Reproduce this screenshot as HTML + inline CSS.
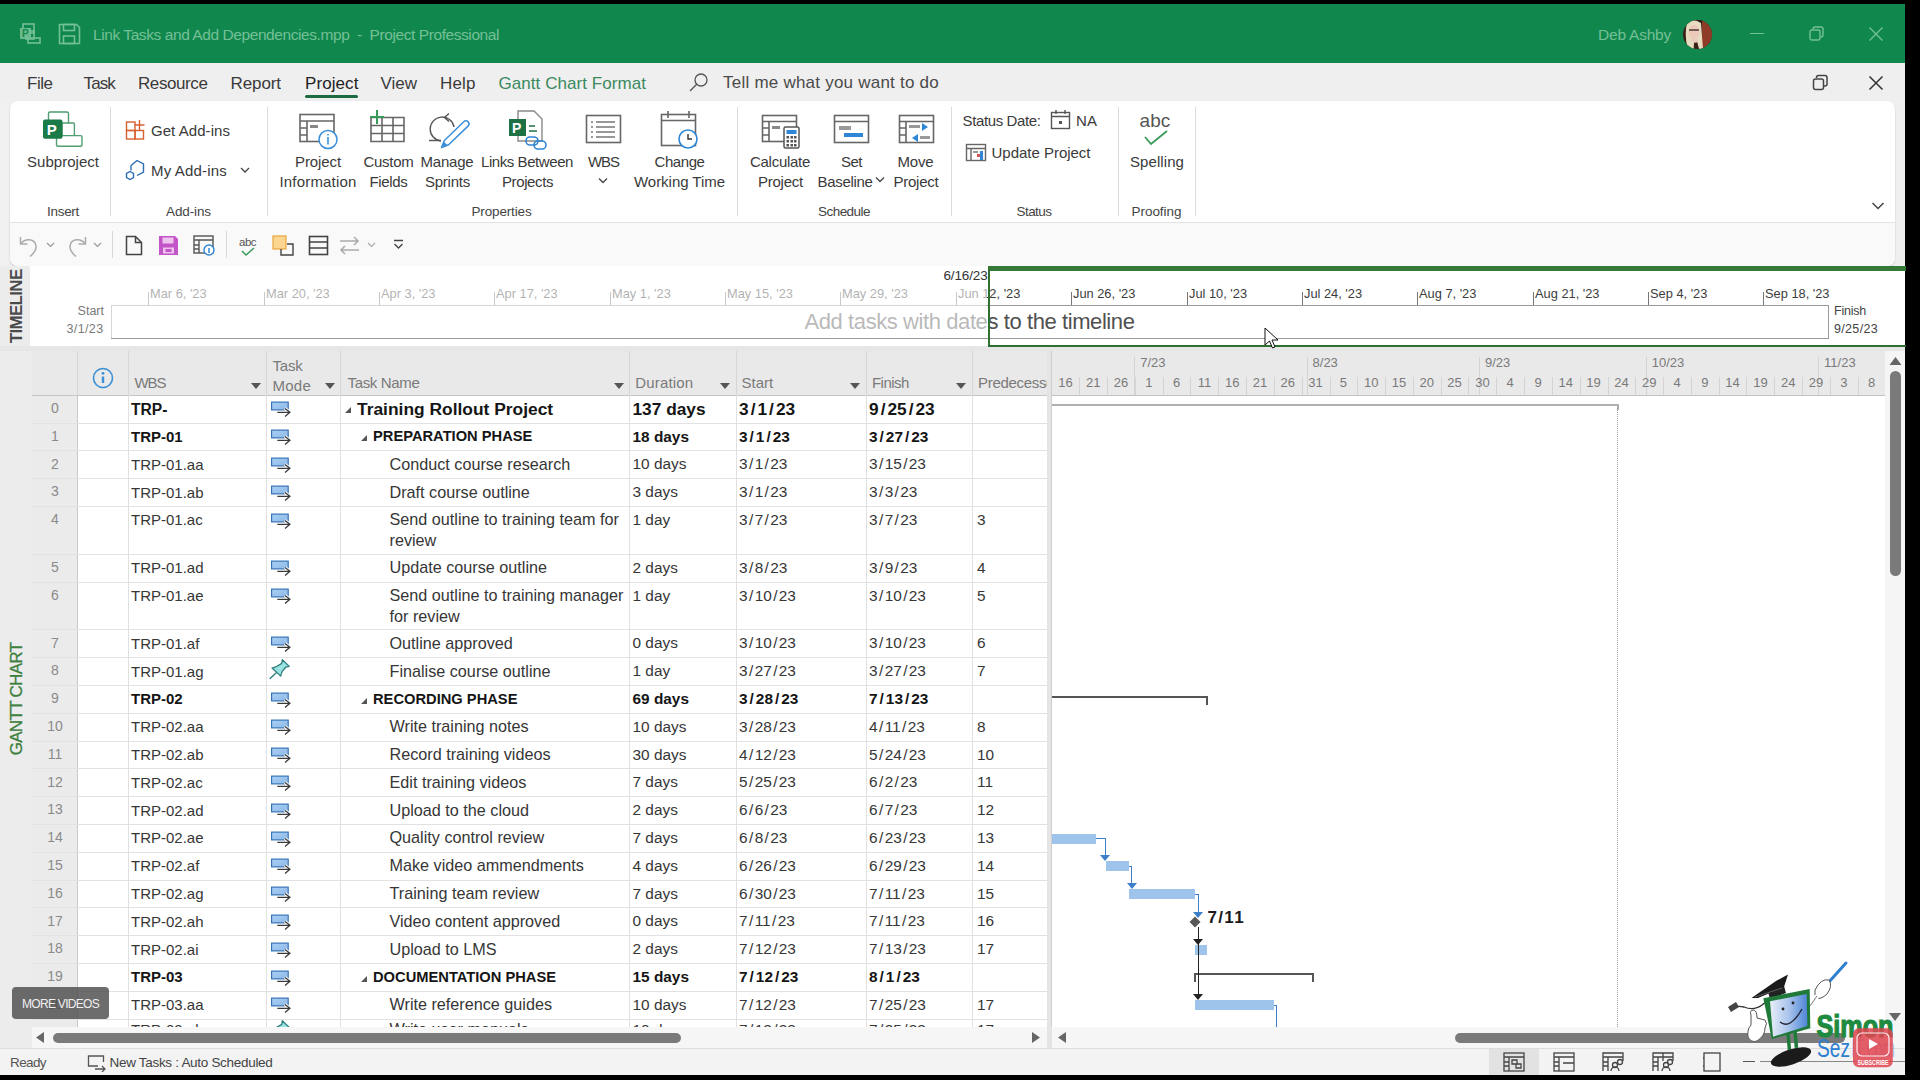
<!DOCTYPE html>
<html><head><meta charset="utf-8"><style>
html,body{margin:0;padding:0;}
body{width:1920px;height:1080px;overflow:hidden;position:relative;background:#000;font-family:"Liberation Sans", sans-serif;}
.t{position:absolute;white-space:nowrap;}

</style></head><body>
<div style="position:absolute;left:0px;top:4px;width:1905px;height:1071px;background:#f0f0f0"></div><div style="position:absolute;left:0px;top:4px;width:1905px;height:59px;background:#10874d"></div><svg style="position:absolute;left:19px;top:23px;" width="22" height="22" viewBox="0 0 22 22"><g fill="none" stroke="#74c096" stroke-width="1.6"><rect x="4" y="1" width="11" height="9"/><rect x="7" y="8" width="8" height="8"/><rect x="9" y="15" width="12" height="5"/></g><rect x="1" y="5" width="11" height="11" fill="#74c096" opacity="0.9"/><text x="3" y="14" font-size="10" font-weight="700" fill="#10874d" font-family="Liberation Sans">P</text></svg><svg style="position:absolute;left:58px;top:23px;" width="23" height="22" viewBox="0 0 23 22"><g fill="none" stroke="#74c096" stroke-width="1.6"><path d="M1.5 1.5h17l3 3v16h-20z"/><rect x="5.5" y="1.5" width="11" height="6"/><rect x="5.5" y="13" width="11" height="7.5"/></g></svg><div class="t" style="left:93.00px;top:26.88px;font-size:15.5px;line-height:15.5px;font-weight:400;color:#74c096;letter-spacing:-0.423px;white-space:pre;">Link Tasks and Add Dependencies.mpp  -  Project Professional</div><div class="t" style="left:1598.00px;top:26.88px;font-size:15.5px;line-height:15.5px;font-weight:400;color:#74c096;letter-spacing:-0.219px;">Deb Ashby</div><svg style="position:absolute;left:1682px;top:18.5px;" width="31" height="31" viewBox="0 0 31 31"><defs><clipPath id="av"><circle cx="15.5" cy="15.5" r="14.5"/></clipPath></defs><g clip-path="url(#av)"><rect width="31" height="31" fill="#3b2219"/><rect x="19" y="0" width="12" height="31" fill="#8e3b27"/><rect x="16" y="0" width="4" height="31" fill="#2a1a12"/><path d="M5 3 q7 -4 14 1 l2 26 h-4 l-3 -12 q-3 6 -2 12 h-6 q-4 -12 -1 -27z" fill="#e8dcc0"/><ellipse cx="12" cy="13" rx="5.5" ry="7" fill="#ecc9b9"/><path d="M7 11 h10" stroke="#4a3a34" stroke-width="1.4"/><path d="M9 18 q3 3 6 -1 l1 6 q-4 2 -7 -1z" fill="#e9cdbf"/></g></svg><div style="position:absolute;left:1750px;top:33px;width:14px;height:1.2px;background:#74c096"></div><svg style="position:absolute;left:1809px;top:26px;" width="16" height="16" viewBox="0 0 16 16"><g fill="none" stroke="#74c096" stroke-width="1.4"><rect x="1" y="4" width="10" height="10" rx="2"/><path d="M4 3.5V3a2 2 0 0 1 2-2h6a2 2 0 0 1 2 2v6a2 2 0 0 1-2 2h-.5"/></g></svg><svg style="position:absolute;left:1868px;top:26px;" width="16" height="16" viewBox="0 0 16 16"><path d="M1.5 1.5L14.5 14.5M14.5 1.5L1.5 14.5" stroke="#74c096" stroke-width="1.4"/></svg><div style="position:absolute;left:0px;top:63px;width:1905px;height:38px;background:#f0efef"></div><div class="t" style="left:27.00px;top:74.81px;font-size:17px;line-height:17px;font-weight:400;color:#3a3a3a;letter-spacing:-0.477px;">File</div><div class="t" style="left:83.50px;top:74.81px;font-size:17px;line-height:17px;font-weight:400;color:#3a3a3a;letter-spacing:-0.867px;">Task</div><div class="t" style="left:138.00px;top:74.81px;font-size:17px;line-height:17px;font-weight:400;color:#3a3a3a;letter-spacing:-0.408px;">Resource</div><div class="t" style="left:230.50px;top:74.81px;font-size:17px;line-height:17px;font-weight:400;color:#3a3a3a;letter-spacing:-0.089px;">Report</div><div class="t" style="left:305.00px;top:74.81px;font-size:17px;line-height:17px;font-weight:400;color:#222222;letter-spacing:0.083px;">Project</div><div class="t" style="left:380.50px;top:74.81px;font-size:17px;line-height:17px;font-weight:400;color:#3a3a3a;letter-spacing:-0.012px;">View</div><div class="t" style="left:440.00px;top:74.81px;font-size:17px;line-height:17px;font-weight:400;color:#3a3a3a;letter-spacing:0.133px;">Help</div><div style="position:absolute;left:305px;top:94.7px;width:53px;height:3px;background:#1d6b42;border-radius:2px"></div><div class="t" style="left:498.50px;top:74.81px;font-size:17px;line-height:17px;font-weight:400;color:#3a8a60;letter-spacing:0.059px;">Gantt Chart Format</div><svg style="position:absolute;left:688px;top:72px;" width="22" height="22" viewBox="0 0 22 22"><g fill="none" stroke="#555" stroke-width="1.3"><circle cx="13" cy="8" r="6"/><path d="M8.7 12.3L2 19"/></g></svg><div class="t" style="left:723.00px;top:74.31px;font-size:17px;line-height:17px;font-weight:400;color:#4a4a4a;letter-spacing:0.230px;">Tell me what you want to do</div><svg style="position:absolute;left:1812px;top:74px;" width="17" height="17" viewBox="0 0 17 17"><g fill="none" stroke="#444" stroke-width="1.5"><rect x="1.5" y="5" width="10" height="10.5" rx="2"/><path d="M4.5 4V3.5a2 2 0 0 1 2-2h6.5a2 2 0 0 1 2 2V10a2 2 0 0 1-2 2h-1"/></g></svg><svg style="position:absolute;left:1868px;top:75px;" width="16" height="16" viewBox="0 0 16 16"><path d="M1.5 1.5L14.5 14.5M14.5 1.5L1.5 14.5" stroke="#333" stroke-width="1.5"/></svg><div style="position:absolute;left:10px;top:101px;width:1885px;height:165px;background:#ffffff;border-radius:8px;box-shadow:0 1px 2px rgba(0,0,0,0.18)"></div><div style="position:absolute;left:10px;top:222px;width:1885px;height:1px;background:#e3e3e3"></div><div style="position:absolute;left:10px;top:223px;width:1885px;height:43px;background:#f9f9f9;border-radius:0 0 8px 8px"></div><div style="position:absolute;left:110px;top:107px;width:1px;height:109px;background:#dcdcdc"></div><div style="position:absolute;left:266.5px;top:107px;width:1px;height:109px;background:#dcdcdc"></div><div style="position:absolute;left:737px;top:107px;width:1px;height:109px;background:#dcdcdc"></div><div style="position:absolute;left:951px;top:107px;width:1px;height:109px;background:#dcdcdc"></div><div style="position:absolute;left:1117.5px;top:107px;width:1px;height:109px;background:#dcdcdc"></div><div style="position:absolute;left:1195px;top:107px;width:1px;height:109px;background:#dcdcdc"></div><svg style="position:absolute;left:42px;top:110px;" width="42" height="38" viewBox="0 0 42 38"><g fill="#fff" stroke="#4f9d70" stroke-width="1.4"><rect x="6.5" y="2" width="20" height="18" rx="1.5"/><rect x="19.9" y="13" width="12.5" height="13" rx="1"/><rect x="14.5" y="25.6" width="25.5" height="10.6" rx="1.5"/></g><rect x="1" y="9.4" width="19.5" height="19.3" rx="2" fill="#1a7a48"/><text x="4.8" y="24.5" font-size="15" font-weight="700" fill="#fff" font-family="Liberation Sans">P</text></svg><div class="t" style="left:27.00px;top:153.70px;font-size:15px;line-height:15px;font-weight:400;color:#3a3a3a;letter-spacing:0.028px;">Subproject</div><div class="t" style="left:47.00px;top:204.57px;font-size:13.5px;line-height:13.5px;font-weight:400;color:#444;letter-spacing:-0.294px;">Insert</div><svg style="position:absolute;left:125px;top:119px;" width="22" height="22" viewBox="0 0 22 22"><g fill="none" stroke="#d6602f" stroke-width="1.4"><rect x="1.5" y="3" width="8.5" height="8.5"/><rect x="1.5" y="11.5" width="8.5" height="8.5"/><rect x="10" y="11.5" width="8.5" height="8.5"/><path d="M14.5 1v10M9.5 6h10"/></g></svg><div class="t" style="left:151.00px;top:123.30px;font-size:15px;line-height:15px;font-weight:400;color:#3a3a3a;letter-spacing:0.055px;">Get Add-ins</div><svg style="position:absolute;left:125px;top:159px;" width="22" height="22" viewBox="0 0 22 22"><g fill="none" stroke="#2d6db3" stroke-width="1.4"><path d="M12 1.5l6.5 3.5v8l-6.5 3.5M6 6.5l6-5M6 6.5v5"/><path d="M5 12.5l3.5 2v4l-3.5 2-3.5-2v-4z"/></g></svg><div class="t" style="left:151.00px;top:163.30px;font-size:15px;line-height:15px;font-weight:400;color:#3a3a3a;letter-spacing:0.180px;">My Add-ins</div><svg style="position:absolute;left:240px;top:166px;" width="10" height="8" viewBox="0 0 10 8"><path d="M1 2l4 4 4-4" fill="none" stroke="#444" stroke-width="1.3"/></svg><div class="t" style="left:166.00px;top:204.57px;font-size:13.5px;line-height:13.5px;font-weight:400;color:#444;letter-spacing:-0.112px;">Add-ins</div><svg style="position:absolute;left:299px;top:113px;" width="40" height="37" viewBox="0 0 40 37"><g fill="none" stroke="#666" stroke-width="1.6"><rect x="1" y="1.5" width="34" height="27"/><path d="M1 8h34M8 8v20.5M1 15h7M1 22h7"/></g><rect x="11" y="12" width="8" height="3" fill="#888"/><circle cx="29" cy="26.5" r="9" fill="#fff" stroke="#3b8fd8" stroke-width="1.5"/><path d="M29 24v7.5M29 21v1.5" stroke="#3b8fd8" stroke-width="1.6"/></svg><div class="t" style="left:295.00px;top:153.90px;font-size:15px;line-height:15px;font-weight:400;color:#3a3a3a;letter-spacing:-0.098px;">Project</div><div class="t" style="left:279.50px;top:173.80px;font-size:15px;line-height:15px;font-weight:400;color:#3a3a3a;letter-spacing:0.178px;">Information</div><svg style="position:absolute;left:367px;top:109px;" width="40" height="35" viewBox="0 0 40 35"><g fill="none" stroke="#666" stroke-width="1.6"><path d="M4 8.5h33v24H4zM4 16.5h33M4 24.5h33M15 8.5v24M26 8.5v24"/></g><path d="M10 1v14M3 8h14" stroke="#3a9a5a" stroke-width="2"/></svg><div class="t" style="left:363.50px;top:153.90px;font-size:15px;line-height:15px;font-weight:400;color:#3a3a3a;letter-spacing:-0.281px;">Custom</div><div class="t" style="left:369.50px;top:173.80px;font-size:15px;line-height:15px;font-weight:400;color:#3a3a3a;letter-spacing:-0.336px;">Fields</div><svg style="position:absolute;left:428px;top:110px;" width="42" height="40" viewBox="0 0 42 40"><g fill="none" stroke="#555" stroke-width="1.4"><path d="M26 17A12 12 0 1 0 13 31"/><path d="M21 3.5L16.5 7.5L21 11.5"/><path d="M1 30.5H13"/></g><path d="M13.5 37.5L20.6 34.8L40 16.1A3 3 0 0 0 35.8 11.7L16.4 30.5Z" fill="#fff" stroke="#3b8fd8" stroke-width="1.5" stroke-linejoin="round"/><path d="M13.5 37.5L15.6 31.4L19.8 35.6Z" fill="#3b8fd8"/></svg><div class="t" style="left:420.50px;top:153.90px;font-size:15px;line-height:15px;font-weight:400;color:#3a3a3a;letter-spacing:-0.203px;">Manage</div><div class="t" style="left:425.00px;top:173.80px;font-size:15px;line-height:15px;font-weight:400;color:#3a3a3a;letter-spacing:-0.241px;">Sprints</div><svg style="position:absolute;left:508px;top:110px;" width="41" height="40" viewBox="0 0 41 40"><path d="M10 1h16l8 8v22H10z" fill="#fff" stroke="#888" stroke-width="1.4"/><rect x="1" y="9" width="17" height="17" fill="#1e7145"/><text x="4" y="23" font-size="14" font-weight="700" fill="#fff" font-family="Liberation Sans">P</text><path d="M21 16h6M21 21h8" stroke="#1e7145" stroke-width="1.6"/><g fill="none" stroke="#2f86d6" stroke-width="1.6"><rect x="18" y="27" width="12" height="8" rx="4"/><rect x="26" y="31" width="12" height="8" rx="4"/></g></svg><div class="t" style="left:481.00px;top:153.90px;font-size:15px;line-height:15px;font-weight:400;color:#3a3a3a;letter-spacing:-0.428px;">Links Between</div><div class="t" style="left:502.00px;top:173.80px;font-size:15px;line-height:15px;font-weight:400;color:#3a3a3a;letter-spacing:-0.398px;">Projects</div><svg style="position:absolute;left:585px;top:114px;" width="37" height="30" viewBox="0 0 37 30"><g fill="none" stroke="#666" stroke-width="1.6"><rect x="1.5" y="1.5" width="34" height="27"/></g><g stroke="#777" stroke-width="1.4"><path d="M6 8h2M11 8h19M6 13h2M11 13h19M6 18h2M11 18h19M6 23h2M11 23h19"/></g></svg><div class="t" style="left:588.00px;top:153.90px;font-size:15px;line-height:15px;font-weight:400;color:#3a3a3a;letter-spacing:-1.057px;">WBS</div><svg style="position:absolute;left:598px;top:177px;" width="10" height="7" viewBox="0 0 10 7"><path d="M1 1.5l4 4 4-4" fill="none" stroke="#444" stroke-width="1.3"/></svg><svg style="position:absolute;left:660px;top:110px;" width="41" height="40" viewBox="0 0 41 40"><g fill="none" stroke="#666" stroke-width="1.6"><rect x="1.5" y="4.5" width="34" height="31"/><path d="M1.5 10.5h34M8 1v7M29 1v7"/></g><circle cx="28" cy="29" r="9" fill="#fff" stroke="#2f86d6" stroke-width="1.6"/><path d="M28 24v5h4" fill="none" stroke="#333" stroke-width="1.4"/></svg><div class="t" style="left:654.50px;top:153.90px;font-size:15px;line-height:15px;font-weight:400;color:#3a3a3a;letter-spacing:-0.424px;">Change</div><div class="t" style="left:634.00px;top:173.80px;font-size:15px;line-height:15px;font-weight:400;color:#3a3a3a;letter-spacing:-0.035px;">Working Time</div><div class="t" style="left:471.50px;top:204.57px;font-size:13.5px;line-height:13.5px;font-weight:400;color:#444;letter-spacing:-0.153px;">Properties</div><svg style="position:absolute;left:761px;top:114px;" width="40" height="36" viewBox="0 0 40 36"><g fill="none" stroke="#666" stroke-width="1.6"><rect x="1.5" y="1.5" width="34" height="26"/><path d="M1.5 7.5h34M8 7.5v20M1.5 14h6.5M1.5 21h6.5"/></g><rect x="11" y="12" width="8" height="3" fill="#888"/><rect x="23" y="13" width="15" height="21" rx="1.5" fill="#fff" stroke="#555" stroke-width="1.5"/><rect x="25.5" y="16" width="10" height="4" fill="#2f86d6"/><g fill="#555"><rect x="25.5" y="22" width="2.5" height="2.5"/><rect x="29.5" y="22" width="2.5" height="2.5"/><rect x="33" y="22" width="2.5" height="2.5"/><rect x="25.5" y="26" width="2.5" height="2.5"/><rect x="29.5" y="26" width="2.5" height="2.5"/><rect x="33" y="26" width="2.5" height="2.5"/><rect x="25.5" y="30" width="2.5" height="2.5"/><rect x="29.5" y="30" width="2.5" height="2.5"/><rect x="33" y="30" width="2.5" height="2.5"/></g></svg><div class="t" style="left:750.00px;top:153.90px;font-size:15px;line-height:15px;font-weight:400;color:#3a3a3a;letter-spacing:-0.283px;">Calculate</div><div class="t" style="left:758.00px;top:173.80px;font-size:15px;line-height:15px;font-weight:400;color:#3a3a3a;letter-spacing:-0.241px;">Project</div><svg style="position:absolute;left:833px;top:114px;" width="37" height="30" viewBox="0 0 37 30"><g fill="none" stroke="#666" stroke-width="1.6"><rect x="1.5" y="1.5" width="34" height="27"/><path d="M1.5 7.5h34"/></g><rect x="6" y="12" width="12" height="4" fill="#999"/><rect x="11" y="19" width="19" height="4" fill="#2f86d6"/></svg><div class="t" style="left:841.00px;top:153.90px;font-size:15px;line-height:15px;font-weight:400;color:#3a3a3a;letter-spacing:-0.505px;">Set</div><div class="t" style="left:817.50px;top:173.80px;font-size:15px;line-height:15px;font-weight:400;color:#3a3a3a;letter-spacing:-0.318px;">Baseline</div><svg style="position:absolute;left:875px;top:176px;" width="10" height="7" viewBox="0 0 10 7"><path d="M1 1.5l4 4 4-4" fill="none" stroke="#444" stroke-width="1.3"/></svg><svg style="position:absolute;left:898px;top:114px;" width="37" height="30" viewBox="0 0 37 30"><g fill="none" stroke="#666" stroke-width="1.6"><rect x="1.5" y="1.5" width="34" height="27"/><path d="M1.5 7.5h34M8 7.5v21M1.5 14h6.5M1.5 21h6.5"/></g><rect x="11" y="11" width="11" height="3" fill="#999"/><path d="M24 9l6 4-6 4z" fill="#2f86d6"/><path d="M20 20l-6 4 6 4z" fill="#2f86d6"/><rect x="22" y="22" width="10" height="3" fill="#999"/></svg><div class="t" style="left:897.50px;top:153.90px;font-size:15px;line-height:15px;font-weight:400;color:#3a3a3a;letter-spacing:-0.172px;">Move</div><div class="t" style="left:893.50px;top:173.80px;font-size:15px;line-height:15px;font-weight:400;color:#3a3a3a;letter-spacing:-0.241px;">Project</div><div class="t" style="left:818.00px;top:204.57px;font-size:13.5px;line-height:13.5px;font-weight:400;color:#444;letter-spacing:-0.537px;">Schedule</div><div class="t" style="left:962.50px;top:113.30px;font-size:15px;line-height:15px;font-weight:400;color:#3a3a3a;letter-spacing:-0.379px;">Status Date:</div><svg style="position:absolute;left:1050px;top:109px;" width="22" height="22" viewBox="0 0 22 22"><g fill="none" stroke="#555" stroke-width="1.4"><rect x="1.5" y="3.5" width="18" height="16"/><path d="M1.5 7.5h18M6 1v4M15 1v4"/></g><rect x="9" y="12" width="3" height="3" fill="#555"/></svg><div class="t" style="left:1076.00px;top:113.30px;font-size:15px;line-height:15px;font-weight:400;color:#3a3a3a;letter-spacing:0.078px;">NA</div><svg style="position:absolute;left:965px;top:143px;" width="23" height="20" viewBox="0 0 23 20"><g fill="none" stroke="#666" stroke-width="1.4"><rect x="1.5" y="1.5" width="19" height="16"/><path d="M1.5 5.5h19M6 5.5v12"/></g><rect x="8" y="8" width="5" height="2" fill="#999"/><rect x="12" y="11" width="6" height="3" fill="#d9534f"/><rect x="15" y="8" width="3" height="9" fill="#2f86d6"/></svg><div class="t" style="left:991.50px;top:144.90px;font-size:15px;line-height:15px;font-weight:400;color:#3a3a3a;letter-spacing:-0.017px;">Update Project</div><div class="t" style="left:1016.50px;top:204.57px;font-size:13.5px;line-height:13.5px;font-weight:400;color:#444;letter-spacing:-0.547px;">Status</div><div class="t" style="left:1139.50px;top:110.92px;font-size:19px;line-height:19px;font-weight:400;color:#555;letter-spacing:0.120px;">abc</div><svg style="position:absolute;left:1143px;top:129px;" width="26" height="18" viewBox="0 0 26 18"><path d="M2 8l6 7L24 2" fill="none" stroke="#3a9a5a" stroke-width="1.8"/></svg><div class="t" style="left:1130.00px;top:153.90px;font-size:15px;line-height:15px;font-weight:400;color:#3a3a3a;letter-spacing:0.078px;">Spelling</div><div class="t" style="left:1131.50px;top:204.57px;font-size:13.5px;line-height:13.5px;font-weight:400;color:#444;letter-spacing:-0.037px;">Proofing</div><svg style="position:absolute;left:1871px;top:201px;" width="14" height="10" viewBox="0 0 14 10"><path d="M1.5 2l5.5 5.5L12.5 2" fill="none" stroke="#444" stroke-width="1.5"/></svg><svg style="position:absolute;left:18px;top:234px;" width="22" height="24" viewBox="0 0 22 24"><g fill="none" stroke="#aaa" stroke-width="1.5"><path d="M3 9.5C7 4 17 4 18 12c0.5 5-3 8-6 10.5"/><path d="M2.5 3v7h7"/></g></svg><svg style="position:absolute;left:46px;top:242px;" width="9" height="6" viewBox="0 0 9 6"><path d="M1 1l3.5 3.5L8 1" fill="none" stroke="#999" stroke-width="1.2"/></svg><svg style="position:absolute;left:66px;top:234px;" width="22" height="24" viewBox="0 0 22 24"><g fill="none" stroke="#aaa" stroke-width="1.5"><path d="M19 9.5C15 4 5 4 4 12c-0.5 5 3 8 6 10.5"/><path d="M19.5 3v7h-7"/></g></svg><svg style="position:absolute;left:93px;top:242px;" width="9" height="6" viewBox="0 0 9 6"><path d="M1 1l3.5 3.5L8 1" fill="none" stroke="#999" stroke-width="1.2"/></svg><div style="position:absolute;left:111.5px;top:231px;width:1px;height:27px;background:#d8d8d8"></div><svg style="position:absolute;left:125px;top:235px;" width="18" height="21" viewBox="0 0 18 21"><path d="M1.5 1.5h9l6 6v12h-15z M10.5 1.5v6h6" fill="none" stroke="#444" stroke-width="1.5"/></svg><svg style="position:absolute;left:158px;top:235px;" width="21" height="21" viewBox="0 0 21 21"><path d="M1 1h16l3 3v16H1z" fill="#c455c8"/><rect x="4.5" y="2.5" width="11" height="6" fill="#eec3ee"/><rect x="5" y="12.5" width="11" height="6" fill="#eec3ee"/><rect x="7.5" y="14" width="6" height="3" fill="#c455c8"/></svg><svg style="position:absolute;left:193px;top:235px;" width="22" height="21" viewBox="0 0 22 21"><g fill="none" stroke="#555" stroke-width="1.4"><rect x="1" y="1" width="19" height="17"/><path d="M1 5h19M6 5v13M1 10h5M1 14h5"/></g><circle cx="16" cy="15" r="5" fill="#fff" stroke="#2f86d6" stroke-width="1.4"/><path d="M16 13v5" stroke="#2f86d6" stroke-width="1.5"/></svg><div style="position:absolute;left:225.5px;top:231px;width:1px;height:27px;background:#d8d8d8"></div><div class="t" style="left:239.00px;top:237.27px;font-size:11.5px;line-height:11.5px;font-weight:400;color:#555;letter-spacing:-0.516px;">abc</div><svg style="position:absolute;left:241px;top:247px;" width="14" height="9" viewBox="0 0 14 9"><path d="M1 4l4 4 8-7" fill="none" stroke="#3a9a5a" stroke-width="1.5"/></svg><svg style="position:absolute;left:272px;top:235px;" width="22" height="21" viewBox="0 0 22 21"><rect x="1" y="1" width="13" height="13" fill="#fcd690" stroke="#e9a53c" stroke-width="1.2"/><path d="M9 14v6h12V9h-6" fill="none" stroke="#444" stroke-width="1.4"/></svg><svg style="position:absolute;left:308px;top:235px;" width="22" height="21" viewBox="0 0 22 21"><g fill="none" stroke="#444" stroke-width="1.6"><rect x="1.5" y="1.5" width="18" height="18"/><path d="M1.5 7h18M1.5 13h18"/></g></svg><svg style="position:absolute;left:338px;top:235px;" width="23" height="21" viewBox="0 0 23 21"><g fill="none" stroke="#aaa" stroke-width="1.5"><path d="M2 6h18M16 2l4 4-4 4M21 15H3M7 11l-4 4 4 4"/></g></svg><svg style="position:absolute;left:367px;top:242px;" width="9" height="6" viewBox="0 0 9 6"><path d="M1 1l3.5 3.5L8 1" fill="none" stroke="#aaa" stroke-width="1.2"/></svg><svg style="position:absolute;left:393px;top:239px;" width="11" height="12" viewBox="0 0 11 12"><path d="M1 1.5h9M1.5 5l4 4 4-4" fill="none" stroke="#444" stroke-width="1.4"/></svg><div style="position:absolute;left:0px;top:266px;width:1905px;height:85px;background:#ffffff"></div><div style="position:absolute;left:0px;top:266px;width:30px;height:80px;background:#ececec"></div><div class="t" style="left:15.5px;top:306.3px;font-size:17px;line-height:17px;font-weight:700;color:#4a4a4a;transform:translate(-50%,-50%) rotate(-90deg);letter-spacing:-0.7px;text-indent:-0.7px">TIMELINE</div><div style="position:absolute;left:0px;top:346px;width:1905px;height:5px;background:#e6e6e6"></div><div style="position:absolute;left:110.5px;top:305px;width:1718px;height:34px;box-sizing:border-box;border:1px solid #9a9a9a;background:#fff"></div><div style="position:absolute;left:147.5px;top:292px;width:1px;height:13px;background:#777"></div><div class="t" style="left:150.30px;top:286.57px;font-size:13.5px;line-height:13.5px;font-weight:400;color:#3c3c3c;transform:scaleX(0.95);transform-origin:0 0;">Mar 6, &#x27;23</div><div style="position:absolute;left:263.5px;top:292px;width:1px;height:13px;background:#777"></div><div class="t" style="left:265.66px;top:286.57px;font-size:13.5px;line-height:13.5px;font-weight:400;color:#3c3c3c;transform:scaleX(0.95);transform-origin:0 0;">Mar 20, &#x27;23</div><div style="position:absolute;left:378.5px;top:292px;width:1px;height:13px;background:#777"></div><div class="t" style="left:381.02px;top:286.57px;font-size:13.5px;line-height:13.5px;font-weight:400;color:#3c3c3c;transform:scaleX(0.95);transform-origin:0 0;">Apr 3, &#x27;23</div><div style="position:absolute;left:493.5px;top:292px;width:1px;height:13px;background:#777"></div><div class="t" style="left:496.38px;top:286.57px;font-size:13.5px;line-height:13.5px;font-weight:400;color:#3c3c3c;transform:scaleX(0.95);transform-origin:0 0;">Apr 17, &#x27;23</div><div style="position:absolute;left:609.5px;top:292px;width:1px;height:13px;background:#777"></div><div class="t" style="left:611.74px;top:286.57px;font-size:13.5px;line-height:13.5px;font-weight:400;color:#3c3c3c;transform:scaleX(0.95);transform-origin:0 0;">May 1, &#x27;23</div><div style="position:absolute;left:724.5px;top:292px;width:1px;height:13px;background:#777"></div><div class="t" style="left:727.10px;top:286.57px;font-size:13.5px;line-height:13.5px;font-weight:400;color:#3c3c3c;transform:scaleX(0.95);transform-origin:0 0;">May 15, &#x27;23</div><div style="position:absolute;left:839.5px;top:292px;width:1px;height:13px;background:#777"></div><div class="t" style="left:842.46px;top:286.57px;font-size:13.5px;line-height:13.5px;font-weight:400;color:#3c3c3c;transform:scaleX(0.95);transform-origin:0 0;">May 29, &#x27;23</div><div style="position:absolute;left:955.5px;top:292px;width:1px;height:13px;background:#777"></div><div class="t" style="left:957.82px;top:286.57px;font-size:13.5px;line-height:13.5px;font-weight:400;color:#3c3c3c;transform:scaleX(0.95);transform-origin:0 0;">Jun 12, &#x27;23</div><div style="position:absolute;left:1070.5px;top:292px;width:1px;height:13px;background:#777"></div><div class="t" style="left:1073.18px;top:286.57px;font-size:13.5px;line-height:13.5px;font-weight:400;color:#3c3c3c;transform:scaleX(0.95);transform-origin:0 0;">Jun 26, &#x27;23</div><div style="position:absolute;left:1186.5px;top:292px;width:1px;height:13px;background:#777"></div><div class="t" style="left:1188.54px;top:286.57px;font-size:13.5px;line-height:13.5px;font-weight:400;color:#3c3c3c;transform:scaleX(0.95);transform-origin:0 0;">Jul 10, &#x27;23</div><div style="position:absolute;left:1301.5px;top:292px;width:1px;height:13px;background:#777"></div><div class="t" style="left:1303.90px;top:286.57px;font-size:13.5px;line-height:13.5px;font-weight:400;color:#3c3c3c;transform:scaleX(0.95);transform-origin:0 0;">Jul 24, &#x27;23</div><div style="position:absolute;left:1416.5px;top:292px;width:1px;height:13px;background:#777"></div><div class="t" style="left:1419.26px;top:286.57px;font-size:13.5px;line-height:13.5px;font-weight:400;color:#3c3c3c;transform:scaleX(0.95);transform-origin:0 0;">Aug 7, &#x27;23</div><div style="position:absolute;left:1532.5px;top:292px;width:1px;height:13px;background:#777"></div><div class="t" style="left:1534.62px;top:286.57px;font-size:13.5px;line-height:13.5px;font-weight:400;color:#3c3c3c;transform:scaleX(0.95);transform-origin:0 0;">Aug 21, &#x27;23</div><div style="position:absolute;left:1647.5px;top:292px;width:1px;height:13px;background:#777"></div><div class="t" style="left:1649.98px;top:286.57px;font-size:13.5px;line-height:13.5px;font-weight:400;color:#3c3c3c;transform:scaleX(0.95);transform-origin:0 0;">Sep 4, &#x27;23</div><div style="position:absolute;left:1762.5px;top:292px;width:1px;height:13px;background:#777"></div><div class="t" style="left:1765.34px;top:286.57px;font-size:13.5px;line-height:13.5px;font-weight:400;color:#3c3c3c;transform:scaleX(0.95);transform-origin:0 0;">Sep 18, &#x27;23</div><div class="t" style="left:77.59px;top:305.12px;font-size:12.5px;line-height:12.5px;font-weight:400;color:#7a7a7a;">Start</div><div class="t" style="left:66.50px;top:322.72px;font-size:12.5px;line-height:12.5px;font-weight:400;color:#7a7a7a;letter-spacing:0.372px;">3/1/23</div><div class="t" style="left:1834.00px;top:305.12px;font-size:12.5px;line-height:12.5px;font-weight:400;color:#444;letter-spacing:-0.224px;">Finish</div><div class="t" style="left:1834.00px;top:322.72px;font-size:12.5px;line-height:12.5px;font-weight:400;color:#444;letter-spacing:0.326px;">9/25/23</div><div class="t" style="left:804.50px;top:310.68px;font-size:22px;line-height:22px;font-weight:400;color:#505050;letter-spacing:-0.413px;">Add tasks with dates to the timeline</div><div style="position:absolute;left:111px;top:276px;width:876px;height:62px;background:rgba(255,255,255,0.6)"></div><div class="t" style="left:943.50px;top:268.57px;font-size:13.5px;line-height:13.5px;font-weight:400;color:#333;letter-spacing:-0.150px;">6/16/23</div><div style="position:absolute;left:987.5px;top:266px;width:918px;height:80.5px;box-sizing:border-box;border-left:2px solid #2f6f2f;border-bottom:2px solid #2f6f2f;border-top:5px solid #347a36"></div><div style="position:absolute;left:0px;top:351px;width:1047px;height:44px;background:#e9e9e9"></div><div style="position:absolute;left:32px;top:394.5px;width:1015px;height:1px;background:#c2c2c2"></div><div style="position:absolute;left:77px;top:351px;width:1px;height:44px;background:#d6d6d6"></div><div style="position:absolute;left:128px;top:351px;width:1px;height:44px;background:#d6d6d6"></div><div style="position:absolute;left:266px;top:351px;width:1px;height:44px;background:#d6d6d6"></div><div style="position:absolute;left:340px;top:351px;width:1px;height:44px;background:#d6d6d6"></div><div style="position:absolute;left:629px;top:351px;width:1px;height:44px;background:#d6d6d6"></div><div style="position:absolute;left:736px;top:351px;width:1px;height:44px;background:#d6d6d6"></div><div style="position:absolute;left:866px;top:351px;width:1px;height:44px;background:#d6d6d6"></div><div style="position:absolute;left:972px;top:351px;width:1px;height:44px;background:#d6d6d6"></div><svg style="position:absolute;left:92px;top:367px;" width="22" height="22" viewBox="0 0 22 22"><circle cx="11" cy="11" r="9.5" fill="none" stroke="#3a8fd6" stroke-width="1.6"/><path d="M11 9.5v6.5" stroke="#3a8fd6" stroke-width="2.4"/><circle cx="11" cy="6.3" r="1.4" fill="#3a8fd6"/></svg><div class="t" style="left:134.50px;top:374.90px;font-size:15px;line-height:15px;font-weight:400;color:#7a7a7a;letter-spacing:-1.057px;">WBS</div><div class="t" style="left:272.50px;top:357.70px;font-size:15px;line-height:15px;font-weight:400;color:#7a7a7a;letter-spacing:-0.211px;">Task</div><div class="t" style="left:272.50px;top:378.30px;font-size:15px;line-height:15px;font-weight:400;color:#7a7a7a;letter-spacing:0.242px;">Mode</div><div class="t" style="left:347.50px;top:374.90px;font-size:15px;line-height:15px;font-weight:400;color:#7a7a7a;letter-spacing:-0.337px;">Task Name</div><div class="t" style="left:635.30px;top:374.90px;font-size:15px;line-height:15px;font-weight:400;color:#7a7a7a;letter-spacing:0.162px;">Duration</div><div class="t" style="left:741.60px;top:374.90px;font-size:15px;line-height:15px;font-weight:400;color:#7a7a7a;letter-spacing:-0.037px;">Start</div><div class="t" style="left:871.90px;top:374.90px;font-size:15px;line-height:15px;font-weight:400;color:#7a7a7a;letter-spacing:-0.503px;">Finish</div><div style="position:absolute;left:972px;top:351px;width:75px;height:44px;overflow:hidden"><div class="t" style="left:6.00px;top:23.90px;font-size:15px;line-height:15px;font-weight:400;color:#7a7a7a;letter-spacing:-0.310px;">Predecessors</div></div><svg style="position:absolute;left:250.5px;top:382.5px;" width="10" height="6" viewBox="0 0 10 6"><path d="M0 0h10L5 6z" fill="#555"/></svg><svg style="position:absolute;left:325px;top:382.5px;" width="10" height="6" viewBox="0 0 10 6"><path d="M0 0h10L5 6z" fill="#555"/></svg><svg style="position:absolute;left:614px;top:382.5px;" width="10" height="6" viewBox="0 0 10 6"><path d="M0 0h10L5 6z" fill="#555"/></svg><svg style="position:absolute;left:720.3px;top:382.5px;" width="10" height="6" viewBox="0 0 10 6"><path d="M0 0h10L5 6z" fill="#555"/></svg><svg style="position:absolute;left:850px;top:382.5px;" width="10" height="6" viewBox="0 0 10 6"><path d="M0 0h10L5 6z" fill="#555"/></svg><svg style="position:absolute;left:956.3px;top:382.5px;" width="10" height="6" viewBox="0 0 10 6"><path d="M0 0h10L5 6z" fill="#555"/></svg><div style="position:absolute;left:0px;top:395px;width:1047px;height:632px;background:#ffffff"></div><div style="position:absolute;left:0px;top:351px;width:32px;height:724px;background:#ececec"></div><div style="position:absolute;left:32px;top:395px;width:45.5px;height:632px;background:#ebebeb"></div><div style="position:absolute;left:32px;top:394.5px;width:1015px;height:1px;background:#c6c6c6"></div><div style="position:absolute;left:77px;top:395px;width:1px;height:632px;background:#c8c8c8"></div><div class="t" style="left:15.5px;top:699px;font-size:17px;line-height:17px;font-weight:400;color:#3d803d;transform:translate(-50%,-50%) rotate(-90deg);letter-spacing:-0.7px;-webkit-text-stroke:0.3px #3d803d">GANTT CHART</div><div style="position:absolute;left:0;top:0;width:1047px;height:1027px;overflow:hidden"><div style="position:absolute;left:32px;top:423px;width:1015px;height:1px;background:#e2e2e2"></div><div class="t" style="left:51.10px;top:400.95px;font-size:14px;line-height:14px;font-weight:400;color:#8a8a8a;">0</div><div class="t" style="left:131.00px;top:402.29px;font-size:15.6px;line-height:15.6px;font-weight:700;color:#151515;">TRP-</div><svg style="position:absolute;left:270px;top:400.3px;" width="22" height="18" viewBox="0 0 22 18"><defs><linearGradient id="tg" x1="0" y1="0" x2="1" y2="1"><stop offset="0" stop-color="#a8d0f6"/><stop offset="1" stop-color="#8fb8e6"/></linearGradient></defs><rect x="1.6" y="2.1" width="16.6" height="7.8" fill="url(#tg)" stroke="#2d6cb0" stroke-width="1.1"/><path d="M15 8.5L19.9 12.3L15 16.4" fill="none" stroke="#fff" stroke-width="3.2"/><path d="M7.3 12.3h12.4M15 8.5L19.9 12.3L15 16.4" fill="none" stroke="#3a3a3a" stroke-width="1.3"/></svg><svg style="position:absolute;left:344px;top:406.3px;" width="8" height="8" viewBox="0 0 8 8"><path d="M7 1v6H1z" fill="#555"/></svg><div class="t" style="left:357.00px;top:400.77px;font-size:17.4px;line-height:17.4px;font-weight:700;color:#151515;">Training Rollout Project</div><div class="t" style="left:632.50px;top:400.86px;font-size:17.3px;line-height:17.3px;font-weight:700;color:#151515;">137 days</div><div class="t" style="left:739.00px;top:400.86px;font-size:17.3px;line-height:17.3px;font-weight:700;color:#151515;">3<span style="margin:0 2.0px">/</span>1<span style="margin:0 2.0px">/</span>23</div><div class="t" style="left:869.00px;top:400.86px;font-size:17.3px;line-height:17.3px;font-weight:700;color:#151515;">9<span style="margin:0 2.0px">/</span>25<span style="margin:0 2.0px">/</span>23</div><div style="position:absolute;left:32px;top:450px;width:1015px;height:1px;background:#e2e2e2"></div><div class="t" style="left:51.10px;top:428.75px;font-size:14px;line-height:14px;font-weight:400;color:#8a8a8a;">1</div><div class="t" style="left:131.00px;top:429.00px;font-size:15px;line-height:15px;font-weight:700;color:#151515;">TRP-01</div><svg style="position:absolute;left:270px;top:428.1px;" width="22" height="18" viewBox="0 0 22 18"><defs><linearGradient id="tg" x1="0" y1="0" x2="1" y2="1"><stop offset="0" stop-color="#a8d0f6"/><stop offset="1" stop-color="#8fb8e6"/></linearGradient></defs><rect x="1.6" y="2.1" width="16.6" height="7.8" fill="url(#tg)" stroke="#2d6cb0" stroke-width="1.1"/><path d="M15 8.5L19.9 12.3L15 16.4" fill="none" stroke="#fff" stroke-width="3.2"/><path d="M7.3 12.3h12.4M15 8.5L19.9 12.3L15 16.4" fill="none" stroke="#3a3a3a" stroke-width="1.3"/></svg><svg style="position:absolute;left:360px;top:434.1px;" width="8" height="8" viewBox="0 0 8 8"><path d="M7 1v6H1z" fill="#555"/></svg><div class="t" style="left:373.00px;top:429.26px;font-size:14.7px;line-height:14.7px;font-weight:700;color:#151515;">PREPARATION PHASE</div><div class="t" style="left:632.50px;top:428.66px;font-size:15.4px;line-height:15.4px;font-weight:700;color:#151515;">18 days</div><div class="t" style="left:739.00px;top:428.66px;font-size:15.4px;line-height:15.4px;font-weight:700;color:#151515;">3<span style="margin:0 2.0px">/</span>1<span style="margin:0 2.0px">/</span>23</div><div class="t" style="left:869.00px;top:428.66px;font-size:15.4px;line-height:15.4px;font-weight:700;color:#151515;">3<span style="margin:0 2.0px">/</span>27<span style="margin:0 2.0px">/</span>23</div><div style="position:absolute;left:32px;top:478px;width:1015px;height:1px;background:#e2e2e2"></div><div class="t" style="left:51.10px;top:456.55px;font-size:14px;line-height:14px;font-weight:400;color:#8a8a8a;">2</div><div class="t" style="left:131.00px;top:456.80px;font-size:15px;line-height:15px;font-weight:400;color:#363636;">TRP-01.aa</div><svg style="position:absolute;left:270px;top:455.90000000000003px;" width="22" height="18" viewBox="0 0 22 18"><defs><linearGradient id="tg" x1="0" y1="0" x2="1" y2="1"><stop offset="0" stop-color="#a8d0f6"/><stop offset="1" stop-color="#8fb8e6"/></linearGradient></defs><rect x="1.6" y="2.1" width="16.6" height="7.8" fill="url(#tg)" stroke="#2d6cb0" stroke-width="1.1"/><path d="M15 8.5L19.9 12.3L15 16.4" fill="none" stroke="#fff" stroke-width="3.2"/><path d="M7.3 12.3h12.4M15 8.5L19.9 12.3L15 16.4" fill="none" stroke="#3a3a3a" stroke-width="1.3"/></svg><div class="t" style="left:389.50px;top:455.79px;font-size:16.2px;line-height:16.2px;font-weight:400;color:#363636;">Conduct course research</div><div class="t" style="left:632.50px;top:456.46px;font-size:15.4px;line-height:15.4px;font-weight:400;color:#363636;">10 days</div><div class="t" style="left:739.00px;top:456.46px;font-size:15.4px;line-height:15.4px;font-weight:400;color:#363636;">3<span style="margin:0 1.4px">/</span>1<span style="margin:0 1.4px">/</span>23</div><div class="t" style="left:869.00px;top:456.46px;font-size:15.4px;line-height:15.4px;font-weight:400;color:#363636;">3<span style="margin:0 1.4px">/</span>15<span style="margin:0 1.4px">/</span>23</div><div style="position:absolute;left:32px;top:506px;width:1015px;height:1px;background:#e2e2e2"></div><div class="t" style="left:51.10px;top:484.35px;font-size:14px;line-height:14px;font-weight:400;color:#8a8a8a;">3</div><div class="t" style="left:131.00px;top:484.60px;font-size:15px;line-height:15px;font-weight:400;color:#363636;">TRP-01.ab</div><svg style="position:absolute;left:270px;top:483.70000000000005px;" width="22" height="18" viewBox="0 0 22 18"><defs><linearGradient id="tg" x1="0" y1="0" x2="1" y2="1"><stop offset="0" stop-color="#a8d0f6"/><stop offset="1" stop-color="#8fb8e6"/></linearGradient></defs><rect x="1.6" y="2.1" width="16.6" height="7.8" fill="url(#tg)" stroke="#2d6cb0" stroke-width="1.1"/><path d="M15 8.5L19.9 12.3L15 16.4" fill="none" stroke="#fff" stroke-width="3.2"/><path d="M7.3 12.3h12.4M15 8.5L19.9 12.3L15 16.4" fill="none" stroke="#3a3a3a" stroke-width="1.3"/></svg><div class="t" style="left:389.50px;top:483.59px;font-size:16.2px;line-height:16.2px;font-weight:400;color:#363636;">Draft course outline</div><div class="t" style="left:632.50px;top:484.26px;font-size:15.4px;line-height:15.4px;font-weight:400;color:#363636;">3 days</div><div class="t" style="left:739.00px;top:484.26px;font-size:15.4px;line-height:15.4px;font-weight:400;color:#363636;">3<span style="margin:0 1.4px">/</span>1<span style="margin:0 1.4px">/</span>23</div><div class="t" style="left:869.00px;top:484.26px;font-size:15.4px;line-height:15.4px;font-weight:400;color:#363636;">3<span style="margin:0 1.4px">/</span>3<span style="margin:0 1.4px">/</span>23</div><div style="position:absolute;left:32px;top:554px;width:1015px;height:1px;background:#e2e2e2"></div><div class="t" style="left:51.10px;top:512.15px;font-size:14px;line-height:14px;font-weight:400;color:#8a8a8a;">4</div><div class="t" style="left:131.00px;top:512.40px;font-size:15px;line-height:15px;font-weight:400;color:#363636;">TRP-01.ac</div><svg style="position:absolute;left:270px;top:511.50000000000006px;" width="22" height="18" viewBox="0 0 22 18"><defs><linearGradient id="tg" x1="0" y1="0" x2="1" y2="1"><stop offset="0" stop-color="#a8d0f6"/><stop offset="1" stop-color="#8fb8e6"/></linearGradient></defs><rect x="1.6" y="2.1" width="16.6" height="7.8" fill="url(#tg)" stroke="#2d6cb0" stroke-width="1.1"/><path d="M15 8.5L19.9 12.3L15 16.4" fill="none" stroke="#fff" stroke-width="3.2"/><path d="M7.3 12.3h12.4M15 8.5L19.9 12.3L15 16.4" fill="none" stroke="#3a3a3a" stroke-width="1.3"/></svg><div class="t" style="left:389.50px;top:511.39px;font-size:16.2px;line-height:16.2px;font-weight:400;color:#363636;">Send outline to training team for</div><div class="t" style="left:389.50px;top:532.39px;font-size:16.2px;line-height:16.2px;font-weight:400;color:#363636;">review</div><div class="t" style="left:632.50px;top:512.06px;font-size:15.4px;line-height:15.4px;font-weight:400;color:#363636;">1 day</div><div class="t" style="left:739.00px;top:512.06px;font-size:15.4px;line-height:15.4px;font-weight:400;color:#363636;">3<span style="margin:0 1.4px">/</span>7<span style="margin:0 1.4px">/</span>23</div><div class="t" style="left:869.00px;top:512.06px;font-size:15.4px;line-height:15.4px;font-weight:400;color:#363636;">3<span style="margin:0 1.4px">/</span>7<span style="margin:0 1.4px">/</span>23</div><div class="t" style="left:977.00px;top:512.06px;font-size:15.4px;line-height:15.4px;font-weight:400;color:#363636;">3</div><div style="position:absolute;left:32px;top:582px;width:1015px;height:1px;background:#e2e2e2"></div><div class="t" style="left:51.10px;top:559.95px;font-size:14px;line-height:14px;font-weight:400;color:#8a8a8a;">5</div><div class="t" style="left:131.00px;top:560.20px;font-size:15px;line-height:15px;font-weight:400;color:#363636;">TRP-01.ad</div><svg style="position:absolute;left:270px;top:559.3000000000001px;" width="22" height="18" viewBox="0 0 22 18"><defs><linearGradient id="tg" x1="0" y1="0" x2="1" y2="1"><stop offset="0" stop-color="#a8d0f6"/><stop offset="1" stop-color="#8fb8e6"/></linearGradient></defs><rect x="1.6" y="2.1" width="16.6" height="7.8" fill="url(#tg)" stroke="#2d6cb0" stroke-width="1.1"/><path d="M15 8.5L19.9 12.3L15 16.4" fill="none" stroke="#fff" stroke-width="3.2"/><path d="M7.3 12.3h12.4M15 8.5L19.9 12.3L15 16.4" fill="none" stroke="#3a3a3a" stroke-width="1.3"/></svg><div class="t" style="left:389.50px;top:559.19px;font-size:16.2px;line-height:16.2px;font-weight:400;color:#363636;">Update course outline</div><div class="t" style="left:632.50px;top:559.86px;font-size:15.4px;line-height:15.4px;font-weight:400;color:#363636;">2 days</div><div class="t" style="left:739.00px;top:559.86px;font-size:15.4px;line-height:15.4px;font-weight:400;color:#363636;">3<span style="margin:0 1.4px">/</span>8<span style="margin:0 1.4px">/</span>23</div><div class="t" style="left:869.00px;top:559.86px;font-size:15.4px;line-height:15.4px;font-weight:400;color:#363636;">3<span style="margin:0 1.4px">/</span>9<span style="margin:0 1.4px">/</span>23</div><div class="t" style="left:977.00px;top:559.86px;font-size:15.4px;line-height:15.4px;font-weight:400;color:#363636;">4</div><div style="position:absolute;left:32px;top:629px;width:1015px;height:1px;background:#e2e2e2"></div><div class="t" style="left:51.10px;top:587.75px;font-size:14px;line-height:14px;font-weight:400;color:#8a8a8a;">6</div><div class="t" style="left:131.00px;top:588.00px;font-size:15px;line-height:15px;font-weight:400;color:#363636;">TRP-01.ae</div><svg style="position:absolute;left:270px;top:587.1px;" width="22" height="18" viewBox="0 0 22 18"><defs><linearGradient id="tg" x1="0" y1="0" x2="1" y2="1"><stop offset="0" stop-color="#a8d0f6"/><stop offset="1" stop-color="#8fb8e6"/></linearGradient></defs><rect x="1.6" y="2.1" width="16.6" height="7.8" fill="url(#tg)" stroke="#2d6cb0" stroke-width="1.1"/><path d="M15 8.5L19.9 12.3L15 16.4" fill="none" stroke="#fff" stroke-width="3.2"/><path d="M7.3 12.3h12.4M15 8.5L19.9 12.3L15 16.4" fill="none" stroke="#3a3a3a" stroke-width="1.3"/></svg><div class="t" style="left:389.50px;top:586.99px;font-size:16.2px;line-height:16.2px;font-weight:400;color:#363636;">Send outline to training manager</div><div class="t" style="left:389.50px;top:607.99px;font-size:16.2px;line-height:16.2px;font-weight:400;color:#363636;">for review</div><div class="t" style="left:632.50px;top:587.66px;font-size:15.4px;line-height:15.4px;font-weight:400;color:#363636;">1 day</div><div class="t" style="left:739.00px;top:587.66px;font-size:15.4px;line-height:15.4px;font-weight:400;color:#363636;">3<span style="margin:0 1.4px">/</span>10<span style="margin:0 1.4px">/</span>23</div><div class="t" style="left:869.00px;top:587.66px;font-size:15.4px;line-height:15.4px;font-weight:400;color:#363636;">3<span style="margin:0 1.4px">/</span>10<span style="margin:0 1.4px">/</span>23</div><div class="t" style="left:977.00px;top:587.66px;font-size:15.4px;line-height:15.4px;font-weight:400;color:#363636;">5</div><div style="position:absolute;left:32px;top:657px;width:1015px;height:1px;background:#e2e2e2"></div><div class="t" style="left:51.10px;top:635.55px;font-size:14px;line-height:14px;font-weight:400;color:#8a8a8a;">7</div><div class="t" style="left:131.00px;top:635.80px;font-size:15px;line-height:15px;font-weight:400;color:#363636;">TRP-01.af</div><svg style="position:absolute;left:270px;top:634.9px;" width="22" height="18" viewBox="0 0 22 18"><defs><linearGradient id="tg" x1="0" y1="0" x2="1" y2="1"><stop offset="0" stop-color="#a8d0f6"/><stop offset="1" stop-color="#8fb8e6"/></linearGradient></defs><rect x="1.6" y="2.1" width="16.6" height="7.8" fill="url(#tg)" stroke="#2d6cb0" stroke-width="1.1"/><path d="M15 8.5L19.9 12.3L15 16.4" fill="none" stroke="#fff" stroke-width="3.2"/><path d="M7.3 12.3h12.4M15 8.5L19.9 12.3L15 16.4" fill="none" stroke="#3a3a3a" stroke-width="1.3"/></svg><div class="t" style="left:389.50px;top:634.79px;font-size:16.2px;line-height:16.2px;font-weight:400;color:#363636;">Outline approved</div><div class="t" style="left:632.50px;top:635.46px;font-size:15.4px;line-height:15.4px;font-weight:400;color:#363636;">0 days</div><div class="t" style="left:739.00px;top:635.46px;font-size:15.4px;line-height:15.4px;font-weight:400;color:#363636;">3<span style="margin:0 1.4px">/</span>10<span style="margin:0 1.4px">/</span>23</div><div class="t" style="left:869.00px;top:635.46px;font-size:15.4px;line-height:15.4px;font-weight:400;color:#363636;">3<span style="margin:0 1.4px">/</span>10<span style="margin:0 1.4px">/</span>23</div><div class="t" style="left:977.00px;top:635.46px;font-size:15.4px;line-height:15.4px;font-weight:400;color:#363636;">6</div><div style="position:absolute;left:32px;top:685px;width:1015px;height:1px;background:#e2e2e2"></div><div class="t" style="left:51.10px;top:663.35px;font-size:14px;line-height:14px;font-weight:400;color:#8a8a8a;">8</div><div class="t" style="left:131.00px;top:663.60px;font-size:15px;line-height:15px;font-weight:400;color:#363636;">TRP-01.ag</div><svg style="position:absolute;left:268px;top:655.8px;" width="24" height="24" viewBox="0 0 24 24"><path d="M2.1 22.6L8 17" stroke="#2f7f7a" stroke-width="1.4" stroke-linecap="round"/><path d="M4.06 12.06L7.67 10.94L13.78 7.33L14.33 3.72L21.28 10.39L17.67 11.22L14.06 15.67L12.67 20.11Z" fill="#9be3e3" stroke="#2f7f7a" stroke-width="1.3" stroke-linejoin="round"/></svg><div class="t" style="left:389.50px;top:662.59px;font-size:16.2px;line-height:16.2px;font-weight:400;color:#363636;">Finalise course outline</div><div class="t" style="left:632.50px;top:663.26px;font-size:15.4px;line-height:15.4px;font-weight:400;color:#363636;">1 day</div><div class="t" style="left:739.00px;top:663.26px;font-size:15.4px;line-height:15.4px;font-weight:400;color:#363636;">3<span style="margin:0 1.4px">/</span>27<span style="margin:0 1.4px">/</span>23</div><div class="t" style="left:869.00px;top:663.26px;font-size:15.4px;line-height:15.4px;font-weight:400;color:#363636;">3<span style="margin:0 1.4px">/</span>27<span style="margin:0 1.4px">/</span>23</div><div class="t" style="left:977.00px;top:663.26px;font-size:15.4px;line-height:15.4px;font-weight:400;color:#363636;">7</div><div style="position:absolute;left:32px;top:713px;width:1015px;height:1px;background:#e2e2e2"></div><div class="t" style="left:51.10px;top:691.15px;font-size:14px;line-height:14px;font-weight:400;color:#8a8a8a;">9</div><div class="t" style="left:131.00px;top:691.40px;font-size:15px;line-height:15px;font-weight:700;color:#151515;">TRP-02</div><svg style="position:absolute;left:270px;top:690.4999999999999px;" width="22" height="18" viewBox="0 0 22 18"><defs><linearGradient id="tg" x1="0" y1="0" x2="1" y2="1"><stop offset="0" stop-color="#a8d0f6"/><stop offset="1" stop-color="#8fb8e6"/></linearGradient></defs><rect x="1.6" y="2.1" width="16.6" height="7.8" fill="url(#tg)" stroke="#2d6cb0" stroke-width="1.1"/><path d="M15 8.5L19.9 12.3L15 16.4" fill="none" stroke="#fff" stroke-width="3.2"/><path d="M7.3 12.3h12.4M15 8.5L19.9 12.3L15 16.4" fill="none" stroke="#3a3a3a" stroke-width="1.3"/></svg><svg style="position:absolute;left:360px;top:696.4999999999999px;" width="8" height="8" viewBox="0 0 8 8"><path d="M7 1v6H1z" fill="#555"/></svg><div class="t" style="left:373.00px;top:691.66px;font-size:14.7px;line-height:14.7px;font-weight:700;color:#151515;">RECORDING PHASE</div><div class="t" style="left:632.50px;top:691.06px;font-size:15.4px;line-height:15.4px;font-weight:700;color:#151515;">69 days</div><div class="t" style="left:739.00px;top:691.06px;font-size:15.4px;line-height:15.4px;font-weight:700;color:#151515;">3<span style="margin:0 2.0px">/</span>28<span style="margin:0 2.0px">/</span>23</div><div class="t" style="left:869.00px;top:691.06px;font-size:15.4px;line-height:15.4px;font-weight:700;color:#151515;">7<span style="margin:0 2.0px">/</span>13<span style="margin:0 2.0px">/</span>23</div><div style="position:absolute;left:32px;top:741px;width:1015px;height:1px;background:#e2e2e2"></div><div class="t" style="left:47.21px;top:718.95px;font-size:14px;line-height:14px;font-weight:400;color:#8a8a8a;">10</div><div class="t" style="left:131.00px;top:719.20px;font-size:15px;line-height:15px;font-weight:400;color:#363636;">TRP-02.aa</div><svg style="position:absolute;left:270px;top:718.2999999999998px;" width="22" height="18" viewBox="0 0 22 18"><defs><linearGradient id="tg" x1="0" y1="0" x2="1" y2="1"><stop offset="0" stop-color="#a8d0f6"/><stop offset="1" stop-color="#8fb8e6"/></linearGradient></defs><rect x="1.6" y="2.1" width="16.6" height="7.8" fill="url(#tg)" stroke="#2d6cb0" stroke-width="1.1"/><path d="M15 8.5L19.9 12.3L15 16.4" fill="none" stroke="#fff" stroke-width="3.2"/><path d="M7.3 12.3h12.4M15 8.5L19.9 12.3L15 16.4" fill="none" stroke="#3a3a3a" stroke-width="1.3"/></svg><div class="t" style="left:389.50px;top:718.19px;font-size:16.2px;line-height:16.2px;font-weight:400;color:#363636;">Write training notes</div><div class="t" style="left:632.50px;top:718.86px;font-size:15.4px;line-height:15.4px;font-weight:400;color:#363636;">10 days</div><div class="t" style="left:739.00px;top:718.86px;font-size:15.4px;line-height:15.4px;font-weight:400;color:#363636;">3<span style="margin:0 1.4px">/</span>28<span style="margin:0 1.4px">/</span>23</div><div class="t" style="left:869.00px;top:718.86px;font-size:15.4px;line-height:15.4px;font-weight:400;color:#363636;">4<span style="margin:0 1.4px">/</span>11<span style="margin:0 1.4px">/</span>23</div><div class="t" style="left:977.00px;top:718.86px;font-size:15.4px;line-height:15.4px;font-weight:400;color:#363636;">8</div><div style="position:absolute;left:32px;top:768px;width:1015px;height:1px;background:#e2e2e2"></div><div class="t" style="left:47.73px;top:746.75px;font-size:14px;line-height:14px;font-weight:400;color:#8a8a8a;">11</div><div class="t" style="left:131.00px;top:747.00px;font-size:15px;line-height:15px;font-weight:400;color:#363636;">TRP-02.ab</div><svg style="position:absolute;left:270px;top:746.0999999999998px;" width="22" height="18" viewBox="0 0 22 18"><defs><linearGradient id="tg" x1="0" y1="0" x2="1" y2="1"><stop offset="0" stop-color="#a8d0f6"/><stop offset="1" stop-color="#8fb8e6"/></linearGradient></defs><rect x="1.6" y="2.1" width="16.6" height="7.8" fill="url(#tg)" stroke="#2d6cb0" stroke-width="1.1"/><path d="M15 8.5L19.9 12.3L15 16.4" fill="none" stroke="#fff" stroke-width="3.2"/><path d="M7.3 12.3h12.4M15 8.5L19.9 12.3L15 16.4" fill="none" stroke="#3a3a3a" stroke-width="1.3"/></svg><div class="t" style="left:389.50px;top:745.99px;font-size:16.2px;line-height:16.2px;font-weight:400;color:#363636;">Record training videos</div><div class="t" style="left:632.50px;top:746.66px;font-size:15.4px;line-height:15.4px;font-weight:400;color:#363636;">30 days</div><div class="t" style="left:739.00px;top:746.66px;font-size:15.4px;line-height:15.4px;font-weight:400;color:#363636;">4<span style="margin:0 1.4px">/</span>12<span style="margin:0 1.4px">/</span>23</div><div class="t" style="left:869.00px;top:746.66px;font-size:15.4px;line-height:15.4px;font-weight:400;color:#363636;">5<span style="margin:0 1.4px">/</span>24<span style="margin:0 1.4px">/</span>23</div><div class="t" style="left:977.00px;top:746.66px;font-size:15.4px;line-height:15.4px;font-weight:400;color:#363636;">10</div><div style="position:absolute;left:32px;top:796px;width:1015px;height:1px;background:#e2e2e2"></div><div class="t" style="left:47.21px;top:774.55px;font-size:14px;line-height:14px;font-weight:400;color:#8a8a8a;">12</div><div class="t" style="left:131.00px;top:774.80px;font-size:15px;line-height:15px;font-weight:400;color:#363636;">TRP-02.ac</div><svg style="position:absolute;left:270px;top:773.8999999999997px;" width="22" height="18" viewBox="0 0 22 18"><defs><linearGradient id="tg" x1="0" y1="0" x2="1" y2="1"><stop offset="0" stop-color="#a8d0f6"/><stop offset="1" stop-color="#8fb8e6"/></linearGradient></defs><rect x="1.6" y="2.1" width="16.6" height="7.8" fill="url(#tg)" stroke="#2d6cb0" stroke-width="1.1"/><path d="M15 8.5L19.9 12.3L15 16.4" fill="none" stroke="#fff" stroke-width="3.2"/><path d="M7.3 12.3h12.4M15 8.5L19.9 12.3L15 16.4" fill="none" stroke="#3a3a3a" stroke-width="1.3"/></svg><div class="t" style="left:389.50px;top:773.79px;font-size:16.2px;line-height:16.2px;font-weight:400;color:#363636;">Edit training videos</div><div class="t" style="left:632.50px;top:774.46px;font-size:15.4px;line-height:15.4px;font-weight:400;color:#363636;">7 days</div><div class="t" style="left:739.00px;top:774.46px;font-size:15.4px;line-height:15.4px;font-weight:400;color:#363636;">5<span style="margin:0 1.4px">/</span>25<span style="margin:0 1.4px">/</span>23</div><div class="t" style="left:869.00px;top:774.46px;font-size:15.4px;line-height:15.4px;font-weight:400;color:#363636;">6<span style="margin:0 1.4px">/</span>2<span style="margin:0 1.4px">/</span>23</div><div class="t" style="left:977.00px;top:774.46px;font-size:15.4px;line-height:15.4px;font-weight:400;color:#363636;">11</div><div style="position:absolute;left:32px;top:824px;width:1015px;height:1px;background:#e2e2e2"></div><div class="t" style="left:47.21px;top:802.35px;font-size:14px;line-height:14px;font-weight:400;color:#8a8a8a;">13</div><div class="t" style="left:131.00px;top:802.60px;font-size:15px;line-height:15px;font-weight:400;color:#363636;">TRP-02.ad</div><svg style="position:absolute;left:270px;top:801.6999999999997px;" width="22" height="18" viewBox="0 0 22 18"><defs><linearGradient id="tg" x1="0" y1="0" x2="1" y2="1"><stop offset="0" stop-color="#a8d0f6"/><stop offset="1" stop-color="#8fb8e6"/></linearGradient></defs><rect x="1.6" y="2.1" width="16.6" height="7.8" fill="url(#tg)" stroke="#2d6cb0" stroke-width="1.1"/><path d="M15 8.5L19.9 12.3L15 16.4" fill="none" stroke="#fff" stroke-width="3.2"/><path d="M7.3 12.3h12.4M15 8.5L19.9 12.3L15 16.4" fill="none" stroke="#3a3a3a" stroke-width="1.3"/></svg><div class="t" style="left:389.50px;top:801.59px;font-size:16.2px;line-height:16.2px;font-weight:400;color:#363636;">Upload to the cloud</div><div class="t" style="left:632.50px;top:802.26px;font-size:15.4px;line-height:15.4px;font-weight:400;color:#363636;">2 days</div><div class="t" style="left:739.00px;top:802.26px;font-size:15.4px;line-height:15.4px;font-weight:400;color:#363636;">6<span style="margin:0 1.4px">/</span>6<span style="margin:0 1.4px">/</span>23</div><div class="t" style="left:869.00px;top:802.26px;font-size:15.4px;line-height:15.4px;font-weight:400;color:#363636;">6<span style="margin:0 1.4px">/</span>7<span style="margin:0 1.4px">/</span>23</div><div class="t" style="left:977.00px;top:802.26px;font-size:15.4px;line-height:15.4px;font-weight:400;color:#363636;">12</div><div style="position:absolute;left:32px;top:852px;width:1015px;height:1px;background:#e2e2e2"></div><div class="t" style="left:47.21px;top:830.15px;font-size:14px;line-height:14px;font-weight:400;color:#8a8a8a;">14</div><div class="t" style="left:131.00px;top:830.40px;font-size:15px;line-height:15px;font-weight:400;color:#363636;">TRP-02.ae</div><svg style="position:absolute;left:270px;top:829.4999999999997px;" width="22" height="18" viewBox="0 0 22 18"><defs><linearGradient id="tg" x1="0" y1="0" x2="1" y2="1"><stop offset="0" stop-color="#a8d0f6"/><stop offset="1" stop-color="#8fb8e6"/></linearGradient></defs><rect x="1.6" y="2.1" width="16.6" height="7.8" fill="url(#tg)" stroke="#2d6cb0" stroke-width="1.1"/><path d="M15 8.5L19.9 12.3L15 16.4" fill="none" stroke="#fff" stroke-width="3.2"/><path d="M7.3 12.3h12.4M15 8.5L19.9 12.3L15 16.4" fill="none" stroke="#3a3a3a" stroke-width="1.3"/></svg><div class="t" style="left:389.50px;top:829.39px;font-size:16.2px;line-height:16.2px;font-weight:400;color:#363636;">Quality control review</div><div class="t" style="left:632.50px;top:830.06px;font-size:15.4px;line-height:15.4px;font-weight:400;color:#363636;">7 days</div><div class="t" style="left:739.00px;top:830.06px;font-size:15.4px;line-height:15.4px;font-weight:400;color:#363636;">6<span style="margin:0 1.4px">/</span>8<span style="margin:0 1.4px">/</span>23</div><div class="t" style="left:869.00px;top:830.06px;font-size:15.4px;line-height:15.4px;font-weight:400;color:#363636;">6<span style="margin:0 1.4px">/</span>23<span style="margin:0 1.4px">/</span>23</div><div class="t" style="left:977.00px;top:830.06px;font-size:15.4px;line-height:15.4px;font-weight:400;color:#363636;">13</div><div style="position:absolute;left:32px;top:880px;width:1015px;height:1px;background:#e2e2e2"></div><div class="t" style="left:47.21px;top:857.95px;font-size:14px;line-height:14px;font-weight:400;color:#8a8a8a;">15</div><div class="t" style="left:131.00px;top:858.20px;font-size:15px;line-height:15px;font-weight:400;color:#363636;">TRP-02.af</div><svg style="position:absolute;left:270px;top:857.2999999999996px;" width="22" height="18" viewBox="0 0 22 18"><defs><linearGradient id="tg" x1="0" y1="0" x2="1" y2="1"><stop offset="0" stop-color="#a8d0f6"/><stop offset="1" stop-color="#8fb8e6"/></linearGradient></defs><rect x="1.6" y="2.1" width="16.6" height="7.8" fill="url(#tg)" stroke="#2d6cb0" stroke-width="1.1"/><path d="M15 8.5L19.9 12.3L15 16.4" fill="none" stroke="#fff" stroke-width="3.2"/><path d="M7.3 12.3h12.4M15 8.5L19.9 12.3L15 16.4" fill="none" stroke="#3a3a3a" stroke-width="1.3"/></svg><div class="t" style="left:389.50px;top:857.19px;font-size:16.2px;line-height:16.2px;font-weight:400;color:#363636;">Make video ammendments</div><div class="t" style="left:632.50px;top:857.86px;font-size:15.4px;line-height:15.4px;font-weight:400;color:#363636;">4 days</div><div class="t" style="left:739.00px;top:857.86px;font-size:15.4px;line-height:15.4px;font-weight:400;color:#363636;">6<span style="margin:0 1.4px">/</span>26<span style="margin:0 1.4px">/</span>23</div><div class="t" style="left:869.00px;top:857.86px;font-size:15.4px;line-height:15.4px;font-weight:400;color:#363636;">6<span style="margin:0 1.4px">/</span>29<span style="margin:0 1.4px">/</span>23</div><div class="t" style="left:977.00px;top:857.86px;font-size:15.4px;line-height:15.4px;font-weight:400;color:#363636;">14</div><div style="position:absolute;left:32px;top:907px;width:1015px;height:1px;background:#e2e2e2"></div><div class="t" style="left:47.21px;top:885.75px;font-size:14px;line-height:14px;font-weight:400;color:#8a8a8a;">16</div><div class="t" style="left:131.00px;top:886.00px;font-size:15px;line-height:15px;font-weight:400;color:#363636;">TRP-02.ag</div><svg style="position:absolute;left:270px;top:885.0999999999996px;" width="22" height="18" viewBox="0 0 22 18"><defs><linearGradient id="tg" x1="0" y1="0" x2="1" y2="1"><stop offset="0" stop-color="#a8d0f6"/><stop offset="1" stop-color="#8fb8e6"/></linearGradient></defs><rect x="1.6" y="2.1" width="16.6" height="7.8" fill="url(#tg)" stroke="#2d6cb0" stroke-width="1.1"/><path d="M15 8.5L19.9 12.3L15 16.4" fill="none" stroke="#fff" stroke-width="3.2"/><path d="M7.3 12.3h12.4M15 8.5L19.9 12.3L15 16.4" fill="none" stroke="#3a3a3a" stroke-width="1.3"/></svg><div class="t" style="left:389.50px;top:884.99px;font-size:16.2px;line-height:16.2px;font-weight:400;color:#363636;">Training team review</div><div class="t" style="left:632.50px;top:885.66px;font-size:15.4px;line-height:15.4px;font-weight:400;color:#363636;">7 days</div><div class="t" style="left:739.00px;top:885.66px;font-size:15.4px;line-height:15.4px;font-weight:400;color:#363636;">6<span style="margin:0 1.4px">/</span>30<span style="margin:0 1.4px">/</span>23</div><div class="t" style="left:869.00px;top:885.66px;font-size:15.4px;line-height:15.4px;font-weight:400;color:#363636;">7<span style="margin:0 1.4px">/</span>11<span style="margin:0 1.4px">/</span>23</div><div class="t" style="left:977.00px;top:885.66px;font-size:15.4px;line-height:15.4px;font-weight:400;color:#363636;">15</div><div style="position:absolute;left:32px;top:935px;width:1015px;height:1px;background:#e2e2e2"></div><div class="t" style="left:47.21px;top:913.55px;font-size:14px;line-height:14px;font-weight:400;color:#8a8a8a;">17</div><div class="t" style="left:131.00px;top:913.80px;font-size:15px;line-height:15px;font-weight:400;color:#363636;">TRP-02.ah</div><svg style="position:absolute;left:270px;top:912.8999999999995px;" width="22" height="18" viewBox="0 0 22 18"><defs><linearGradient id="tg" x1="0" y1="0" x2="1" y2="1"><stop offset="0" stop-color="#a8d0f6"/><stop offset="1" stop-color="#8fb8e6"/></linearGradient></defs><rect x="1.6" y="2.1" width="16.6" height="7.8" fill="url(#tg)" stroke="#2d6cb0" stroke-width="1.1"/><path d="M15 8.5L19.9 12.3L15 16.4" fill="none" stroke="#fff" stroke-width="3.2"/><path d="M7.3 12.3h12.4M15 8.5L19.9 12.3L15 16.4" fill="none" stroke="#3a3a3a" stroke-width="1.3"/></svg><div class="t" style="left:389.50px;top:912.79px;font-size:16.2px;line-height:16.2px;font-weight:400;color:#363636;">Video content approved</div><div class="t" style="left:632.50px;top:913.46px;font-size:15.4px;line-height:15.4px;font-weight:400;color:#363636;">0 days</div><div class="t" style="left:739.00px;top:913.46px;font-size:15.4px;line-height:15.4px;font-weight:400;color:#363636;">7<span style="margin:0 1.4px">/</span>11<span style="margin:0 1.4px">/</span>23</div><div class="t" style="left:869.00px;top:913.46px;font-size:15.4px;line-height:15.4px;font-weight:400;color:#363636;">7<span style="margin:0 1.4px">/</span>11<span style="margin:0 1.4px">/</span>23</div><div class="t" style="left:977.00px;top:913.46px;font-size:15.4px;line-height:15.4px;font-weight:400;color:#363636;">16</div><div style="position:absolute;left:32px;top:963px;width:1015px;height:1px;background:#e2e2e2"></div><div class="t" style="left:47.21px;top:941.35px;font-size:14px;line-height:14px;font-weight:400;color:#8a8a8a;">18</div><div class="t" style="left:131.00px;top:941.60px;font-size:15px;line-height:15px;font-weight:400;color:#363636;">TRP-02.ai</div><svg style="position:absolute;left:270px;top:940.6999999999995px;" width="22" height="18" viewBox="0 0 22 18"><defs><linearGradient id="tg" x1="0" y1="0" x2="1" y2="1"><stop offset="0" stop-color="#a8d0f6"/><stop offset="1" stop-color="#8fb8e6"/></linearGradient></defs><rect x="1.6" y="2.1" width="16.6" height="7.8" fill="url(#tg)" stroke="#2d6cb0" stroke-width="1.1"/><path d="M15 8.5L19.9 12.3L15 16.4" fill="none" stroke="#fff" stroke-width="3.2"/><path d="M7.3 12.3h12.4M15 8.5L19.9 12.3L15 16.4" fill="none" stroke="#3a3a3a" stroke-width="1.3"/></svg><div class="t" style="left:389.50px;top:940.59px;font-size:16.2px;line-height:16.2px;font-weight:400;color:#363636;">Upload to LMS</div><div class="t" style="left:632.50px;top:941.26px;font-size:15.4px;line-height:15.4px;font-weight:400;color:#363636;">2 days</div><div class="t" style="left:739.00px;top:941.26px;font-size:15.4px;line-height:15.4px;font-weight:400;color:#363636;">7<span style="margin:0 1.4px">/</span>12<span style="margin:0 1.4px">/</span>23</div><div class="t" style="left:869.00px;top:941.26px;font-size:15.4px;line-height:15.4px;font-weight:400;color:#363636;">7<span style="margin:0 1.4px">/</span>13<span style="margin:0 1.4px">/</span>23</div><div class="t" style="left:977.00px;top:941.26px;font-size:15.4px;line-height:15.4px;font-weight:400;color:#363636;">17</div><div style="position:absolute;left:32px;top:991px;width:1015px;height:1px;background:#e2e2e2"></div><div class="t" style="left:47.21px;top:969.15px;font-size:14px;line-height:14px;font-weight:400;color:#8a8a8a;">19</div><div class="t" style="left:131.00px;top:969.40px;font-size:15px;line-height:15px;font-weight:700;color:#151515;">TRP-03</div><svg style="position:absolute;left:270px;top:968.4999999999994px;" width="22" height="18" viewBox="0 0 22 18"><defs><linearGradient id="tg" x1="0" y1="0" x2="1" y2="1"><stop offset="0" stop-color="#a8d0f6"/><stop offset="1" stop-color="#8fb8e6"/></linearGradient></defs><rect x="1.6" y="2.1" width="16.6" height="7.8" fill="url(#tg)" stroke="#2d6cb0" stroke-width="1.1"/><path d="M15 8.5L19.9 12.3L15 16.4" fill="none" stroke="#fff" stroke-width="3.2"/><path d="M7.3 12.3h12.4M15 8.5L19.9 12.3L15 16.4" fill="none" stroke="#3a3a3a" stroke-width="1.3"/></svg><svg style="position:absolute;left:360px;top:974.4999999999994px;" width="8" height="8" viewBox="0 0 8 8"><path d="M7 1v6H1z" fill="#555"/></svg><div class="t" style="left:373.00px;top:969.66px;font-size:14.7px;line-height:14.7px;font-weight:700;color:#151515;">DOCUMENTATION PHASE</div><div class="t" style="left:632.50px;top:969.06px;font-size:15.4px;line-height:15.4px;font-weight:700;color:#151515;">15 days</div><div class="t" style="left:739.00px;top:969.06px;font-size:15.4px;line-height:15.4px;font-weight:700;color:#151515;">7<span style="margin:0 2.0px">/</span>12<span style="margin:0 2.0px">/</span>23</div><div class="t" style="left:869.00px;top:969.06px;font-size:15.4px;line-height:15.4px;font-weight:700;color:#151515;">8<span style="margin:0 2.0px">/</span>1<span style="margin:0 2.0px">/</span>23</div><div style="position:absolute;left:32px;top:1019px;width:1015px;height:1px;background:#e2e2e2"></div><div class="t" style="left:47.21px;top:996.95px;font-size:14px;line-height:14px;font-weight:400;color:#8a8a8a;">20</div><div class="t" style="left:131.00px;top:997.20px;font-size:15px;line-height:15px;font-weight:400;color:#363636;">TRP-03.aa</div><svg style="position:absolute;left:270px;top:996.2999999999994px;" width="22" height="18" viewBox="0 0 22 18"><defs><linearGradient id="tg" x1="0" y1="0" x2="1" y2="1"><stop offset="0" stop-color="#a8d0f6"/><stop offset="1" stop-color="#8fb8e6"/></linearGradient></defs><rect x="1.6" y="2.1" width="16.6" height="7.8" fill="url(#tg)" stroke="#2d6cb0" stroke-width="1.1"/><path d="M15 8.5L19.9 12.3L15 16.4" fill="none" stroke="#fff" stroke-width="3.2"/><path d="M7.3 12.3h12.4M15 8.5L19.9 12.3L15 16.4" fill="none" stroke="#3a3a3a" stroke-width="1.3"/></svg><div class="t" style="left:389.50px;top:996.19px;font-size:16.2px;line-height:16.2px;font-weight:400;color:#363636;">Write reference guides</div><div class="t" style="left:632.50px;top:996.86px;font-size:15.4px;line-height:15.4px;font-weight:400;color:#363636;">10 days</div><div class="t" style="left:739.00px;top:996.86px;font-size:15.4px;line-height:15.4px;font-weight:400;color:#363636;">7<span style="margin:0 1.4px">/</span>12<span style="margin:0 1.4px">/</span>23</div><div class="t" style="left:869.00px;top:996.86px;font-size:15.4px;line-height:15.4px;font-weight:400;color:#363636;">7<span style="margin:0 1.4px">/</span>25<span style="margin:0 1.4px">/</span>23</div><div class="t" style="left:977.00px;top:996.86px;font-size:15.4px;line-height:15.4px;font-weight:400;color:#363636;">17</div><div style="position:absolute;left:32px;top:1046px;width:1015px;height:1px;background:#e2e2e2"></div><div class="t" style="left:47.21px;top:1024.75px;font-size:14px;line-height:14px;font-weight:400;color:#8a8a8a;">21</div><div class="t" style="left:131.00px;top:1022.00px;font-size:15px;line-height:15px;font-weight:400;color:#363636;">TRP-03.ab</div><svg style="position:absolute;left:268px;top:1017.1999999999994px;" width="24" height="24" viewBox="0 0 24 24"><path d="M2.1 22.6L8 17" stroke="#2f7f7a" stroke-width="1.4" stroke-linecap="round"/><path d="M4.06 12.06L7.67 10.94L13.78 7.33L14.33 3.72L21.28 10.39L17.67 11.22L14.06 15.67L12.67 20.11Z" fill="#9be3e3" stroke="#2f7f7a" stroke-width="1.3" stroke-linejoin="round"/></svg><div class="t" style="left:389.50px;top:1020.99px;font-size:16.2px;line-height:16.2px;font-weight:400;color:#363636;">Write user manuals</div><div class="t" style="left:632.50px;top:1021.66px;font-size:15.4px;line-height:15.4px;font-weight:400;color:#363636;">10 days</div><div class="t" style="left:739.00px;top:1021.66px;font-size:15.4px;line-height:15.4px;font-weight:400;color:#363636;">7<span style="margin:0 1.4px">/</span>12<span style="margin:0 1.4px">/</span>23</div><div class="t" style="left:869.00px;top:1021.66px;font-size:15.4px;line-height:15.4px;font-weight:400;color:#363636;">7<span style="margin:0 1.4px">/</span>25<span style="margin:0 1.4px">/</span>23</div><div class="t" style="left:977.00px;top:1021.66px;font-size:15.4px;line-height:15.4px;font-weight:400;color:#363636;">17</div></div><div style="position:absolute;left:128px;top:395px;width:1px;height:632px;background:#e0e0e0"></div><div style="position:absolute;left:266px;top:395px;width:1px;height:632px;background:#e0e0e0"></div><div style="position:absolute;left:340px;top:395px;width:1px;height:632px;background:#e0e0e0"></div><div style="position:absolute;left:629px;top:395px;width:1px;height:632px;background:#e0e0e0"></div><div style="position:absolute;left:736px;top:395px;width:1px;height:632px;background:#e0e0e0"></div><div style="position:absolute;left:866px;top:395px;width:1px;height:632px;background:#e0e0e0"></div><div style="position:absolute;left:972px;top:395px;width:1px;height:632px;background:#e0e0e0"></div><div style="position:absolute;left:1046.5px;top:351px;width:4.5px;height:676px;background:#e4e4e4"></div><div style="position:absolute;left:1050.5px;top:351px;width:1px;height:676px;background:#cfcfcf"></div><div style="position:absolute;left:1051.5px;top:351px;width:834px;height:676px;background:#ffffff"></div><div style="position:absolute;left:1051.5px;top:351px;width:834px;height:44px;background:#e9e9e9"></div><div style="position:absolute;left:1051.5px;top:394.5px;width:834px;height:1px;background:#c2c2c2"></div><div style="position:absolute;left:1134px;top:357px;width:1px;height:38px;background:#d4d4d4"></div><div class="t" style="left:1140.20px;top:355.80px;font-size:13px;line-height:13px;font-weight:400;color:#7a7a7a;">7/23</div><div style="position:absolute;left:1307px;top:357px;width:1px;height:38px;background:#d4d4d4"></div><div class="t" style="left:1312.56px;top:355.80px;font-size:13px;line-height:13px;font-weight:400;color:#7a7a7a;">8/23</div><div style="position:absolute;left:1479px;top:357px;width:1px;height:38px;background:#d4d4d4"></div><div class="t" style="left:1484.92px;top:355.80px;font-size:13px;line-height:13px;font-weight:400;color:#7a7a7a;">9/23</div><div style="position:absolute;left:1646px;top:357px;width:1px;height:38px;background:#d4d4d4"></div><div class="t" style="left:1651.72px;top:355.80px;font-size:13px;line-height:13px;font-weight:400;color:#7a7a7a;">10/23</div><div style="position:absolute;left:1818px;top:357px;width:1px;height:38px;background:#d4d4d4"></div><div class="t" style="left:1824.08px;top:355.80px;font-size:13px;line-height:13px;font-weight:400;color:#7a7a7a;">11/23</div><div class="t" style="left:1058.17px;top:375.80px;font-size:13px;line-height:13px;font-weight:400;color:#7a7a7a;">16</div><div style="position:absolute;left:1079px;top:377px;width:1px;height:18px;background:#d4d4d4"></div><div class="t" style="left:1085.97px;top:375.80px;font-size:13px;line-height:13px;font-weight:400;color:#7a7a7a;">21</div><div style="position:absolute;left:1107px;top:377px;width:1px;height:18px;background:#d4d4d4"></div><div class="t" style="left:1113.77px;top:375.80px;font-size:13px;line-height:13px;font-weight:400;color:#7a7a7a;">26</div><div style="position:absolute;left:1135px;top:377px;width:1px;height:18px;background:#d4d4d4"></div><div class="t" style="left:1145.18px;top:375.80px;font-size:13px;line-height:13px;font-weight:400;color:#7a7a7a;">1</div><div style="position:absolute;left:1163px;top:377px;width:1px;height:18px;background:#d4d4d4"></div><div class="t" style="left:1172.98px;top:375.80px;font-size:13px;line-height:13px;font-weight:400;color:#7a7a7a;">6</div><div style="position:absolute;left:1190px;top:377px;width:1px;height:18px;background:#d4d4d4"></div><div class="t" style="left:1197.65px;top:375.80px;font-size:13px;line-height:13px;font-weight:400;color:#7a7a7a;">11</div><div style="position:absolute;left:1218px;top:377px;width:1px;height:18px;background:#d4d4d4"></div><div class="t" style="left:1224.97px;top:375.80px;font-size:13px;line-height:13px;font-weight:400;color:#7a7a7a;">16</div><div style="position:absolute;left:1246px;top:377px;width:1px;height:18px;background:#d4d4d4"></div><div class="t" style="left:1252.77px;top:375.80px;font-size:13px;line-height:13px;font-weight:400;color:#7a7a7a;">21</div><div style="position:absolute;left:1274px;top:377px;width:1px;height:18px;background:#d4d4d4"></div><div class="t" style="left:1280.57px;top:375.80px;font-size:13px;line-height:13px;font-weight:400;color:#7a7a7a;">26</div><div style="position:absolute;left:1302px;top:377px;width:1px;height:18px;background:#d4d4d4"></div><div class="t" style="left:1308.37px;top:375.80px;font-size:13px;line-height:13px;font-weight:400;color:#7a7a7a;">31</div><div style="position:absolute;left:1330px;top:377px;width:1px;height:18px;background:#d4d4d4"></div><div class="t" style="left:1339.78px;top:375.80px;font-size:13px;line-height:13px;font-weight:400;color:#7a7a7a;">5</div><div style="position:absolute;left:1357px;top:377px;width:1px;height:18px;background:#d4d4d4"></div><div class="t" style="left:1363.97px;top:375.80px;font-size:13px;line-height:13px;font-weight:400;color:#7a7a7a;">10</div><div style="position:absolute;left:1385px;top:377px;width:1px;height:18px;background:#d4d4d4"></div><div class="t" style="left:1391.77px;top:375.80px;font-size:13px;line-height:13px;font-weight:400;color:#7a7a7a;">15</div><div style="position:absolute;left:1413px;top:377px;width:1px;height:18px;background:#d4d4d4"></div><div class="t" style="left:1419.57px;top:375.80px;font-size:13px;line-height:13px;font-weight:400;color:#7a7a7a;">20</div><div style="position:absolute;left:1441px;top:377px;width:1px;height:18px;background:#d4d4d4"></div><div class="t" style="left:1447.37px;top:375.80px;font-size:13px;line-height:13px;font-weight:400;color:#7a7a7a;">25</div><div style="position:absolute;left:1468px;top:377px;width:1px;height:18px;background:#d4d4d4"></div><div class="t" style="left:1475.17px;top:375.80px;font-size:13px;line-height:13px;font-weight:400;color:#7a7a7a;">30</div><div style="position:absolute;left:1496px;top:377px;width:1px;height:18px;background:#d4d4d4"></div><div class="t" style="left:1506.58px;top:375.80px;font-size:13px;line-height:13px;font-weight:400;color:#7a7a7a;">4</div><div style="position:absolute;left:1524px;top:377px;width:1px;height:18px;background:#d4d4d4"></div><div class="t" style="left:1534.38px;top:375.80px;font-size:13px;line-height:13px;font-weight:400;color:#7a7a7a;">9</div><div style="position:absolute;left:1552px;top:377px;width:1px;height:18px;background:#d4d4d4"></div><div class="t" style="left:1558.57px;top:375.80px;font-size:13px;line-height:13px;font-weight:400;color:#7a7a7a;">14</div><div style="position:absolute;left:1580px;top:377px;width:1px;height:18px;background:#d4d4d4"></div><div class="t" style="left:1586.37px;top:375.80px;font-size:13px;line-height:13px;font-weight:400;color:#7a7a7a;">19</div><div style="position:absolute;left:1608px;top:377px;width:1px;height:18px;background:#d4d4d4"></div><div class="t" style="left:1614.17px;top:375.80px;font-size:13px;line-height:13px;font-weight:400;color:#7a7a7a;">24</div><div style="position:absolute;left:1635px;top:377px;width:1px;height:18px;background:#d4d4d4"></div><div class="t" style="left:1641.97px;top:375.80px;font-size:13px;line-height:13px;font-weight:400;color:#7a7a7a;">29</div><div style="position:absolute;left:1663px;top:377px;width:1px;height:18px;background:#d4d4d4"></div><div class="t" style="left:1673.38px;top:375.80px;font-size:13px;line-height:13px;font-weight:400;color:#7a7a7a;">4</div><div style="position:absolute;left:1691px;top:377px;width:1px;height:18px;background:#d4d4d4"></div><div class="t" style="left:1701.18px;top:375.80px;font-size:13px;line-height:13px;font-weight:400;color:#7a7a7a;">9</div><div style="position:absolute;left:1719px;top:377px;width:1px;height:18px;background:#d4d4d4"></div><div class="t" style="left:1725.37px;top:375.80px;font-size:13px;line-height:13px;font-weight:400;color:#7a7a7a;">14</div><div style="position:absolute;left:1746px;top:377px;width:1px;height:18px;background:#d4d4d4"></div><div class="t" style="left:1753.17px;top:375.80px;font-size:13px;line-height:13px;font-weight:400;color:#7a7a7a;">19</div><div style="position:absolute;left:1774px;top:377px;width:1px;height:18px;background:#d4d4d4"></div><div class="t" style="left:1780.97px;top:375.80px;font-size:13px;line-height:13px;font-weight:400;color:#7a7a7a;">24</div><div style="position:absolute;left:1802px;top:377px;width:1px;height:18px;background:#d4d4d4"></div><div class="t" style="left:1808.77px;top:375.80px;font-size:13px;line-height:13px;font-weight:400;color:#7a7a7a;">29</div><div style="position:absolute;left:1830px;top:377px;width:1px;height:18px;background:#d4d4d4"></div><div class="t" style="left:1840.18px;top:375.80px;font-size:13px;line-height:13px;font-weight:400;color:#7a7a7a;">3</div><div style="position:absolute;left:1858px;top:377px;width:1px;height:18px;background:#d4d4d4"></div><div class="t" style="left:1867.98px;top:375.80px;font-size:13px;line-height:13px;font-weight:400;color:#7a7a7a;">8</div><div style="position:absolute;left:1051.5px;top:404px;width:566.0px;height:2px;background:#b0b0b0"></div><div style="position:absolute;left:1616.5px;top:404px;width:2px;height:6px;background:#b0b0b0"></div><div style="position:absolute;left:1617px;top:406px;width:0;height:621px;border-left:1px dotted #a0a0a0"></div><div style="position:absolute;left:1051.5px;top:695.4999999999999px;width:156.0px;height:2px;background:#555"></div><div style="position:absolute;left:1205.5px;top:695.4999999999999px;width:2px;height:9px;background:#555"></div><div style="position:absolute;left:1051.5px;top:833.4999999999997px;width:44.5px;height:10px;background:#9fc4ec"></div><div style="position:absolute;left:1106.4px;top:861.2999999999996px;width:22.199999999999818px;height:10px;background:#9fc4ec"></div><div style="position:absolute;left:1128.6px;top:889.0999999999996px;width:66.80000000000018px;height:10px;background:#9fc4ec"></div><div style="position:absolute;left:1195.4px;top:944.6999999999995px;width:11.599999999999909px;height:10px;background:#9fc4ec"></div><div style="position:absolute;left:1195.4px;top:1000.2999999999994px;width:78.59999999999991px;height:10px;background:#9fc4ec"></div><div style="position:absolute;left:1193.7px;top:972.9999999999994px;width:120px;height:2px;background:#555"></div><div style="position:absolute;left:1193.7px;top:972.9999999999994px;width:2.5px;height:9px;background:#555"></div><div style="position:absolute;left:1311.5px;top:972.9999999999994px;width:2.5px;height:9px;background:#555"></div><div style="position:absolute;left:1096px;top:837.9999999999997px;width:9.799999999999955px;height:1.2px;background:#3d7fc9"></div><div style="position:absolute;left:1104.8px;top:837.9999999999997px;width:1.2px;height:18.799999999999955px;background:#3d7fc9"></div><svg style="position:absolute;left:1100.3999999999999px;top:855.2999999999996px;" width="10" height="7" viewBox="0 0 10 7"><path d="M0 0h10L5 6z" fill="#3d7fc9"/></svg><div style="position:absolute;left:1128.6px;top:865.7999999999996px;width:3.7000000000000455px;height:1.2px;background:#3d7fc9"></div><div style="position:absolute;left:1131.3px;top:865.7999999999996px;width:1.2px;height:18.799999999999955px;background:#3d7fc9"></div><svg style="position:absolute;left:1126.8999999999999px;top:883.0999999999996px;" width="10" height="7" viewBox="0 0 10 7"><path d="M0 0h10L5 6z" fill="#3d7fc9"/></svg><div style="position:absolute;left:1195.4px;top:893.5999999999996px;width:3.2999999999999545px;height:1.2px;background:#3d7fc9"></div><div style="position:absolute;left:1197.7px;top:893.5999999999996px;width:1.2px;height:19.799999999999955px;background:#3d7fc9"></div><svg style="position:absolute;left:1193.3px;top:911.8999999999995px;" width="10" height="7" viewBox="0 0 10 7"><path d="M0 0h10L5 6z" fill="#3d7fc9"/></svg><svg style="position:absolute;left:1189px;top:915.8999999999995px;" width="12" height="12" viewBox="0 0 12 12"><path d="M6 0.5L11.5 6 6 11.5 0.5 6z" fill="#595959"/></svg><div class="t" style="left:1207.50px;top:908.51px;font-size:17px;line-height:17px;font-weight:700;color:#1a1a1a;letter-spacing:1.336px;">7/11</div><div style="position:absolute;left:1197.5px;top:926.8999999999995px;width:1.3px;height:68.39999999999986px;background:#222"></div><svg style="position:absolute;left:1193px;top:938.6999999999995px;" width="10" height="7" viewBox="0 0 10 7"><path d="M0 0h10L5 6z" fill="#222"/></svg><svg style="position:absolute;left:1193px;top:994.2999999999994px;" width="10" height="7" viewBox="0 0 10 7"><path d="M0 0h10L5 6z" fill="#222"/></svg><div style="position:absolute;left:1274px;top:1005.2999999999994px;width:3px;height:1.2px;background:#3d7fc9"></div><div style="position:absolute;left:1276px;top:1005.2999999999994px;width:1.2px;height:21.700000000000614px;background:#3d7fc9"></div><div style="position:absolute;left:1885px;top:351px;width:20px;height:676px;background:#f5f5f5"></div><svg style="position:absolute;left:1889px;top:356px;" width="13" height="10" viewBox="0 0 13 10"><path d="M0.5 9h12L6.5 1z" fill="#666"/></svg><div style="position:absolute;left:1890px;top:371px;width:11px;height:205px;border-radius:5.5px;background:#7a7a7a"></div><svg style="position:absolute;left:1888px;top:1012px;" width="14" height="10" viewBox="0 0 14 10"><path d="M1 1h12L7 9z" fill="#666"/></svg><div style="position:absolute;left:32px;top:1027px;width:1015px;height:21px;background:#f6f6f6"></div><svg style="position:absolute;left:35px;top:1031px;" width="10" height="13" viewBox="0 0 10 13"><path d="M9 1v11L1 6.5z" fill="#666"/></svg><div style="position:absolute;left:52.5px;top:1032.5px;width:628px;height:10px;border-radius:5px;background:#7a7a7a"></div><svg style="position:absolute;left:1031px;top:1031px;" width="10" height="13" viewBox="0 0 10 13"><path d="M1 1v11l8-5.5z" fill="#666"/></svg><div style="position:absolute;left:1046.5px;top:1027px;width:5px;height:21px;background:#e4e4e4"></div><div style="position:absolute;left:1051.5px;top:1027px;width:853.5px;height:21px;background:#f6f6f6"></div><svg style="position:absolute;left:1057px;top:1031px;" width="10" height="13" viewBox="0 0 10 13"><path d="M9 1v11L1 6.5z" fill="#666"/></svg><div style="position:absolute;left:1455px;top:1032.5px;width:390px;height:10px;border-radius:5px;background:#7a7a7a"></div><div style="position:absolute;left:0px;top:1048px;width:1905px;height:27px;background:#f3f3f3"></div><div style="position:absolute;left:0px;top:1048px;width:1905px;height:1px;background:#dddddd"></div><div class="t" style="left:10.00px;top:1056.07px;font-size:13.5px;line-height:13.5px;font-weight:400;color:#555;letter-spacing:-0.606px;">Ready</div><svg style="position:absolute;left:87px;top:1054px;" width="20" height="18" viewBox="0 0 20 18"><g fill="none" stroke="#555" stroke-width="1.3"><path d="M11 12H1.5V2h15v6"/><path d="M8 15h10M15 12l3 3-3 3"/></g></svg><div class="t" style="left:109.50px;top:1056.07px;font-size:13.5px;line-height:13.5px;font-weight:400;color:#444;letter-spacing:-0.302px;">New Tasks : Auto Scheduled</div><div style="position:absolute;left:1489px;top:1049px;width:50px;height:26px;background:#e2e2e2"></div><svg style="position:absolute;left:1503px;top:1052px;" width="22" height="20" viewBox="0 0 22 20"><g fill="none" stroke="#444" stroke-width="1.3"><rect x="1" y="1" width="20" height="18"/><path d="M1 5h20M6 5v14M1 10h5M1 14h5M9 8h5v4h-5zM13 12h5v4h-5z"/></g></svg><svg style="position:absolute;left:1553px;top:1052px;" width="22" height="20" viewBox="0 0 22 20"><g fill="none" stroke="#444" stroke-width="1.3"><rect x="1" y="1" width="20" height="18"/><path d="M1 5h20M6 5v14M1 10h5M1 14h5M10 11h11"/></g></svg><svg style="position:absolute;left:1602px;top:1052px;" width="22" height="20" viewBox="0 0 22 20"><g fill="none" stroke="#444" stroke-width="1.3"><path d="M1 19V1h20v8M1 5h20M6 5v14M1 10h5M1 14h5"/><circle cx="13" cy="13" r="2.5"/><circle cx="18" cy="10" r="2.5"/><path d="M9 19a4 4 0 0 1 8 0"/></g></svg><svg style="position:absolute;left:1652px;top:1052px;" width="22" height="20" viewBox="0 0 22 20"><g fill="none" stroke="#444" stroke-width="1.3"><path d="M1 19V1h20v8M1 5h20M6 5v14M1 10h5M1 14h5M11 1v8"/><circle cx="14" cy="13" r="2.5"/><circle cx="18" cy="10" r="2.5"/><path d="M10 19a4 4 0 0 1 8 0"/></g></svg><svg style="position:absolute;left:1702px;top:1052px;" width="20" height="20" viewBox="0 0 20 20"><g fill="none" stroke="#444" stroke-width="1.3"><rect x="2" y="1" width="16" height="18"/><path d="M2 6h-1M2 14h-1"/></g></svg><div style="position:absolute;left:1743px;top:1061px;width:12px;height:1.3px;background:#555"></div><div style="position:absolute;left:1760px;top:1061px;width:145px;height:1.3px;background:#888"></div><div style="position:absolute;left:12px;top:987px;width:97px;height:32px;border-radius:4px;background:rgba(72,72,72,0.8)"></div><div class="t" style="left:22.00px;top:997.84px;font-size:12px;line-height:12px;font-weight:400;color:#f0f0f0;letter-spacing:-0.699px;">MORE VIDEOS</div><svg style="position:absolute;left:1720px;top:950px;" width="185" height="126" viewBox="0 0 185 126">
<path d="M10 59 q6 -4 14 -2 q10 4 18 -2 q6 -6 16 -6" fill="none" stroke="#333" stroke-width="1.3"/>
<path d="M8 57 l8 -5 3 5 -8 5z" fill="#444"/>
<path d="M126 13 L99 43" stroke="#2f7fd0" stroke-width="3" stroke-linecap="round"/>
<path d="M95 40 q6 -12 14 -10 q4 6 -2 14 q-6 6 -12 4z" fill="#fff" stroke="#555" stroke-width="1"/>
<path d="M90 56 L97 46" stroke="#fff" stroke-width="5"/><path d="M90 56 L97 46" stroke="#555" stroke-width="0.8" fill="none"/>
<path d="M31.5 48 L56 31 L68 24.5 L64 37 L38 48z" fill="#1b1b1b"/><path d="M48 42 L64 36 L66 43 L50 49z" fill="#222"/><path d="M35 47 L62 38" stroke="#888" stroke-width="0.6"/>

<path d="M43.3 48.2 L89.7 39.1 L90.3 78.3 L51.8 89.1 z" fill="#1f7a3a"/>
<defs><linearGradient id="scr" x1="0" y1="0" x2="1" y2="0"><stop offset="0" stop-color="#e8eef8"/><stop offset="0.5" stop-color="#a9c4ec"/><stop offset="1" stop-color="#4f86d6"/></linearGradient></defs><path d="M50 51.2 L86.7 44 L87.3 75.9 L53 86.7 z" fill="url(#scr)"/>
<circle cx="63" cy="59" r="1.4" fill="#222"/><circle cx="73" cy="53" r="1.4" fill="#222"/>
<path d="M60 72 q10 8 22 -13" fill="none" stroke="#223" stroke-width="1.4"/>
<rect x="67" y="84" width="3.5" height="16" fill="#1f7a3a" transform="rotate(-5 68 92)"/>
<rect x="74" y="82" width="3.5" height="16" fill="#1f7a3a" transform="rotate(-5 75 90)"/>
<ellipse cx="71" cy="107" rx="21" ry="7.5" fill="#1b1b1b" transform="rotate(-18 71 107)"/>
<path d="M31 65 q-2 -5 3 -5 q3 1 3 8 l8 2 q3 3 0 8 q0 8 -8 13 q-6 2 -9 -4 q-1 -8 3 -12z" fill="#fff" stroke="#555" stroke-width="1"/>
<text x="96.5" y="86.5" font-family="Liberation Sans" font-weight="700" font-size="31" fill="#1d8a3f" stroke="#1d8a3f" stroke-width="1.2" textLength="77" lengthAdjust="spacingAndGlyphs">Simon</text>
<text x="97" y="107" font-family="Liberation Sans" font-weight="400" font-size="25" fill="#2f7fd0" textLength="33" lengthAdjust="spacingAndGlyphs">Sez</text>
<text x="131" y="107" font-family="Liberation Sans" font-weight="400" font-size="25" fill="#a8c8ec" textLength="44" lengthAdjust="spacingAndGlyphs">IT.com</text>
<rect x="133" y="78.3" width="39.8" height="39" rx="6" fill="#e0434f" opacity="0.85"/>
<rect x="137" y="83" width="32" height="23" rx="5" fill="none" stroke="#fff" stroke-width="1.2" opacity="0.9"/>
<path d="M149 89 l9 5 -9 5z" fill="#fff"/>
<text x="137.5" y="114.5" font-family="Liberation Sans" font-weight="700" font-size="8" fill="#fff" textLength="31" lengthAdjust="spacingAndGlyphs">SUBSCRIBE</text>
</svg><svg style="position:absolute;left:1264px;top:327px;" width="14" height="22" viewBox="0 0 14 22"><path d="M1 1v17l4.5-4 3 7 2.5-1-3-7h6z" fill="#fff" stroke="#111" stroke-width="1"/></svg>
</body></html>
